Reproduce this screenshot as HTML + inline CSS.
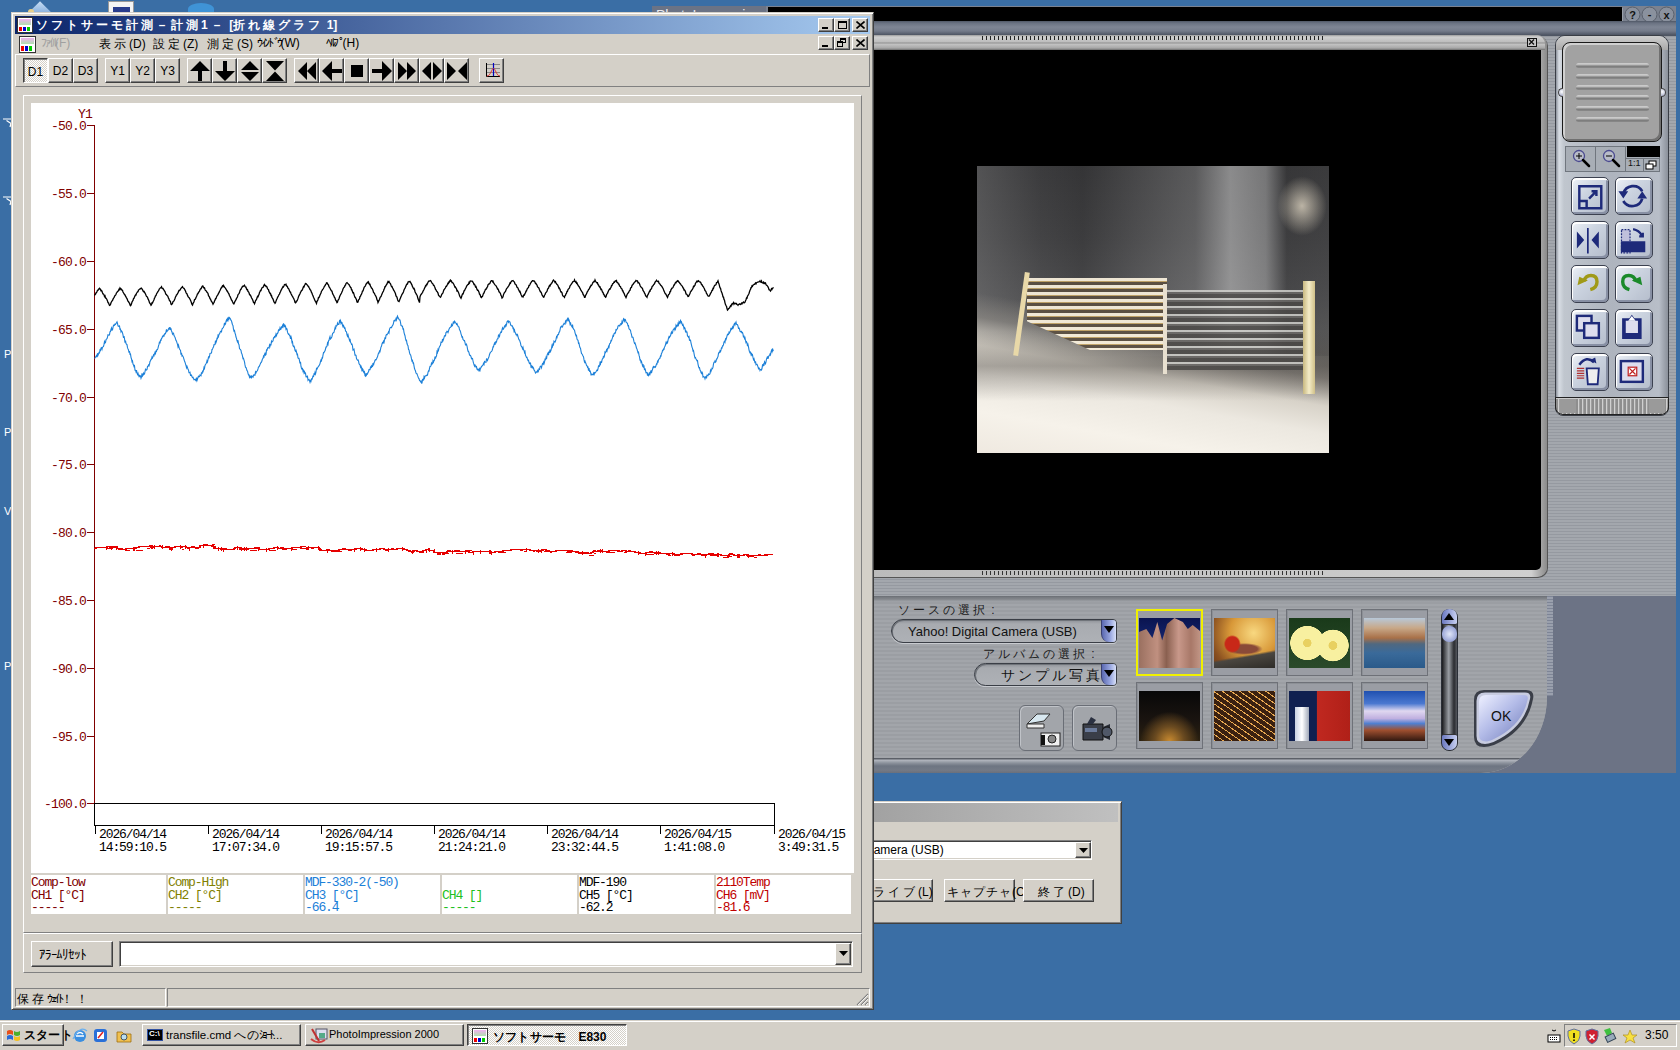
<!DOCTYPE html>
<html><head><meta charset="utf-8">
<style>
*{box-sizing:border-box;margin:0;padding:0}
html,body{width:1680px;height:1050px;overflow:hidden}
body{background:#3a6ea5;position:relative;font-family:"Liberation Sans",sans-serif;font-size:12px;color:#000}
.a{position:absolute}
.face{background:#d4d0c8}
.btn{position:absolute;background:#d4d0c8;border-top:1px solid #fff;border-left:1px solid #fff;border-right:1px solid #404040;border-bottom:1px solid #404040;box-shadow:inset -1px -1px #808080}
.sunk{position:absolute;border-top:1px solid #808080;border-left:1px solid #808080;border-right:1px solid #fff;border-bottom:1px solid #fff;box-shadow:inset 1px 1px #404040,inset -1px -1px #d4d0c8}
.thin-up{position:absolute;border-top:1px solid #fff;border-left:1px solid #fff;border-right:1px solid #808080;border-bottom:1px solid #808080}
.thin-dn{position:absolute;border-top:1px solid #808080;border-left:1px solid #808080;border-right:1px solid #fff;border-bottom:1px solid #fff}
.jf{letter-spacing:3px}
.jh{letter-spacing:-2.5px}
.t0 .jf{letter-spacing:0.2px}
.t1 .jf{letter-spacing:1px}
.mono{font-family:"Liberation Mono",monospace}
.tb{width:25px;height:25px;top:58px}
.tb span{position:absolute;left:0;right:0;top:5px;text-align:center;font-size:12px}
.lg{position:absolute;top:875px;width:135px;height:39px;background:#fff;font-family:"Liberation Mono",monospace;font-size:13px;line-height:12.5px;letter-spacing:-1.1px;padding:2px 0 0 0;white-space:pre;overflow:hidden}
.yl{position:absolute;left:44px;width:50px;font-family:"Liberation Mono",monospace;font-size:13px;line-height:15px;color:#800000;letter-spacing:-0.8px;white-space:pre}
.xl{position:absolute;top:829px;font-family:"Liberation Mono",monospace;font-size:13px;line-height:12.5px;letter-spacing:-1.1px;white-space:pre;color:#000}
.th{position:absolute;width:67px;height:67px;border:1px solid #6e7178;box-shadow:inset 1px 1px #8c9096;background:#9a9da4}
.th i{position:absolute;left:2px;top:8px;width:61px;height:50px;display:block}
.pb{position:absolute;width:43px;height:43px;border-radius:9px;background:linear-gradient(#dfe6f2,#9aa5c4);border:1px solid #5c6270;box-shadow:inset 1px 1px #fff,inset -1px -1px #6b738c}
</style></head><body>

<!-- ============ desktop icons peeking ============ -->
<div class="a" style="left:22px;top:0;width:36px;height:12px;background:linear-gradient(#cfe3f7,#8fb5e0);clip-path:polygon(20% 100%,50% 10%,80% 100%)"></div>
<div class="a" style="left:28px;top:9px;width:6px;height:3px;background:#e8d08a;border-radius:3px 3px 0 0"></div>
<div class="a" style="left:108px;top:1px;width:26px;height:11px;background:#f4f4f4;border:1px solid #9a9a9a;border-bottom:none"></div>
<div class="a" style="left:113px;top:7px;width:17px;height:5px;background:#283c8c"></div>
<div class="a" style="left:188px;top:3px;width:26px;height:12px;border-radius:50% 50% 0 0;background:#3f93d6"></div>
<svg class="a" style="left:3px;top:118px" width="8" height="10"><path d="M0 1H8M3.5 2.5L8 5.5L7 9" stroke="#fff" fill="none" stroke-width="1.2"/></svg>
<svg class="a" style="left:3px;top:196px" width="8" height="10"><path d="M0 1H8M3.5 2.5L8 5.5L7 9" stroke="#fff" fill="none" stroke-width="1.2"/></svg>
<div class="a" style="left:4px;top:348px;color:#fff;font-size:11px">P</div>
<div class="a" style="left:4px;top:426px;color:#fff;font-size:11px">P</div>
<div class="a" style="left:4px;top:505px;color:#fff;font-size:11px">V</div>
<div class="a" style="left:4px;top:660px;color:#fff;font-size:11px">P</div>

<!-- ============ PhotoImpression window ============ -->
<div class="a" style="left:652px;top:6px;width:114px;height:8px;background:#6b7385;overflow:hidden"><span class="a" style="left:4px;top:1px;color:#e8eaf0;font-size:14px;white-space:pre">PhotoImpression</span></div>
<div class="a" style="left:766px;top:6px;width:910px;height:590px;background:repeating-linear-gradient(#9599a0 0 1px,#a3a7ad 1px 3px)"></div>
<div class="a" style="left:766px;top:6px;width:910px;height:16px;background:#7b8290"></div>
<div class="a" style="left:768px;top:7px;width:854px;height:14px;background:#000;box-shadow:1px 1px #9aa0aa"></div>
<svg class="a" style="left:1624px;top:6px" width="52" height="17">
 <g fill="#8a919e" stroke="#5a606c" stroke-width="1"><circle cx="8.5" cy="8.5" r="7.5"/><circle cx="25.5" cy="8.5" r="7.5"/><circle cx="42.5" cy="8.5" r="7.5"/></g>
 <g font-family="Liberation Sans" font-weight="bold" font-size="11" fill="#111" text-anchor="middle"><text x="8.5" y="13">?</text><text x="25.5" y="12">-</text><text x="42.5" y="12.5">x</text></g>
</svg>
<div class="a" style="left:766px;top:21px;width:910px;height:15px;background:linear-gradient(#4f5766 0,#6a7282 2px,#7e8594 6px,#747b8a 10px,#4e5563 14px)"></div>
<!-- video panel -->
<div class="a" style="left:766px;top:35px;width:781px;height:542px;border-radius:0 10px 10px 0;background:linear-gradient(90deg,#b8b8b8,#cfcfcf 98%,#8a8a8a);box-shadow:1px 1px #555"></div>
<div class="a" style="left:766px;top:35px;width:779px;height:15px;border-radius:0 9px 0 0;background:linear-gradient(#9c9c9c 0,#d0d0d0 2px,#bdbdbd 7px,#8e8e8e 8px,#c4c4c4 9px,#a8a8a8 13px,#707070 15px)"></div>
<div class="a" style="left:982px;top:36px;width:341px;height:4px;background:repeating-linear-gradient(90deg,#222 0 1px,transparent 1px 4px)"></div>
<div class="a" style="left:1527px;top:38px;width:10px;height:9px;border:1.5px solid #111;background:#c8c8c8"><svg class="a" style="left:0;top:0" width="7" height="6"><path d="M1 0.5L6 5.5M6 0.5L1 5.5" stroke="#111" stroke-width="1.3"/></svg></div>
<div class="a" style="left:766px;top:50px;width:775px;height:520px;background:#000;border-radius:0 0 5px 0"></div>
<div class="a" style="left:982px;top:571px;width:341px;height:4px;background:repeating-linear-gradient(90deg,#333 0 1.5px,transparent 1.5px 4px)"></div>
<!-- photo -->
<div class="a" style="left:977px;top:166px;width:352px;height:287px;overflow:hidden;background:linear-gradient(#3a3a3c 0%,#434345 25%,#505052 45%,#5e5e5e 60%,#77726c 75%,#8a857e 100%)">
 <div class="a" style="left:0;top:0;width:352px;height:190px;background:linear-gradient(90deg,rgba(140,140,140,.3) 0%,rgba(70,70,70,.1) 18%,rgba(20,20,20,.15) 30%,rgba(120,120,120,.2) 45%,rgba(150,150,150,.35) 62%,rgba(205,205,205,.55) 72%,rgba(190,190,190,.45) 82%,rgba(40,40,40,.2) 88%,rgba(60,60,60,.2) 100%)"></div>
 <div class="a" style="left:300px;top:10px;width:50px;height:60px;background:radial-gradient(rgba(230,220,200,.75),rgba(200,190,170,0) 70%)"></div>
 <div class="a" style="left:0;top:0;width:352px;height:287px;background:linear-gradient(190deg,rgba(0,0,0,0) 54%,rgba(150,146,140,.55) 61%,rgba(220,215,205,.95) 69%,#ece8e0 77%,#f6f2ea 88%,#efe9e0 100%)"></div>
 <div class="a" style="left:0;top:165px;width:352px;height:70px;background:linear-gradient(180deg,rgba(70,66,62,0),rgba(70,66,62,.4) 50%,rgba(70,66,62,0))"></div>
 <div class="a" style="left:50px;top:112px;width:140px;height:72px;background:repeating-linear-gradient(180deg,#fff6e2 0 3px,#c8a868 3px 4px,#5a4e40 4px 7px);opacity:.9;clip-path:polygon(0 0,100% 0,100% 100%,45% 100%,0 60%)"></div>
 <div class="a" style="left:187px;top:124px;width:150px;height:80px;background:repeating-linear-gradient(180deg,#d0d0cc 0 2px,#6a6866 2px 4px,#4a4846 4px 8px);opacity:.85"></div>
 <div class="a" style="left:42px;top:106px;width:5px;height:84px;background:#e8d8a8;transform:rotate(8deg)"></div>
 <div class="a" style="left:186px;top:118px;width:4px;height:90px;background:#e8e0d0"></div>
 <div class="a" style="left:326px;top:115px;width:12px;height:113px;background:linear-gradient(90deg,#c8b880,#f4ecc8,#d0c088)"></div>
</div>
<!-- gap between video frame and right panel + right panel -->
<div class="a" style="left:1555px;top:35px;width:114px;height:381px;border-radius:10px 10px 8px 8px;background:linear-gradient(90deg,#8c929c 0,#d8dde4 3px,#c0c6ce 8px,#aeb4be 50%,#b8bec8 92%,#8a909a 100%);border:1px solid #3a3e46"></div>
<div class="a" style="left:1556px;top:36px;width:112px;height:14px;border-radius:9px 9px 0 0;background:linear-gradient(#cfcfcf,#a9a9a9)"></div>
<div class="a" style="left:1562px;top:42px;width:100px;height:100px;border-radius:8px;background:#a2a2a2;border:1px solid #1a1a1a;box-shadow:inset 2px 2px #d0d0d0,inset -2px -2px #707070"></div>
<div class="a" style="left:1576px;top:63px;width:73px;height:5px;border-radius:3px;background:linear-gradient(#d0d0d0,#b8b8b8 40%,#7a7a7a 60%,#8a8a8a)"></div><div class="a" style="left:1576px;top:74px;width:73px;height:5px;border-radius:3px;background:linear-gradient(#d0d0d0,#b8b8b8 40%,#7a7a7a 60%,#8a8a8a)"></div><div class="a" style="left:1576px;top:85px;width:73px;height:5px;border-radius:3px;background:linear-gradient(#d0d0d0,#b8b8b8 40%,#7a7a7a 60%,#8a8a8a)"></div><div class="a" style="left:1576px;top:95px;width:73px;height:5px;border-radius:3px;background:linear-gradient(#d0d0d0,#b8b8b8 40%,#7a7a7a 60%,#8a8a8a)"></div><div class="a" style="left:1576px;top:106px;width:73px;height:5px;border-radius:3px;background:linear-gradient(#d0d0d0,#b8b8b8 40%,#7a7a7a 60%,#8a8a8a)"></div><div class="a" style="left:1576px;top:117px;width:73px;height:5px;border-radius:3px;background:linear-gradient(#d0d0d0,#b8b8b8 40%,#7a7a7a 60%,#8a8a8a)"></div>
<div class="a" style="left:1565px;top:146px;width:95px;height:26px;background:#a8aeb6;border:1px solid #70767e"></div>
<div class="a" style="left:1595px;top:146px;width:1px;height:26px;background:#70767e"></div>
<div class="a" style="left:1625px;top:146px;width:1px;height:26px;background:#70767e"></div>
<div class="a" style="left:1627px;top:146px;width:33px;height:11px;background:#000"></div>
<div class="a" style="left:1626px;top:158px;width:34px;height:1px;background:#70767e"></div>
<div class="a" style="left:1643px;top:158px;width:1px;height:14px;background:#70767e"></div>
<span class="a" style="left:1628px;top:158px;font-size:9px;color:#111">1:1</span>
<svg class="a" style="left:1645px;top:160px" width="13" height="10"><rect x="4" y="1" width="7" height="5" fill="#fff" stroke="#000"/><rect x="1" y="4" width="7" height="5" fill="#fff" stroke="#000"/></svg>
<svg class="a" style="left:1570px;top:148px" width="90" height="24">
 <circle cx="9" cy="8" r="5.5" fill="#b8bcc8" stroke="#4a4a90" stroke-width="1.3"/><path d="M6 8H12M9 5V11" stroke="#000"/><path d="M13 12L19 18" stroke="#000" stroke-width="2.5" stroke-linecap="round"/>
 <circle cx="39" cy="8" r="5.5" fill="#b8bcc8" stroke="#4a4a90" stroke-width="1.3"/><path d="M36 8H42" stroke="#000"/><path d="M43 12L49 18" stroke="#000" stroke-width="2.5" stroke-linecap="round"/>
</svg>
<div class="a" style="left:1558px;top:88px;width:5px;height:9px;border-radius:5px 0 0 5px;background:radial-gradient(circle at 70% 40%,#fff,#9aa0c0);border:1px solid #444;border-right:none"></div>
<div class="a" style="left:1661px;top:88px;width:5px;height:9px;border-radius:0 5px 5px 0;background:radial-gradient(circle at 30% 40%,#fff,#9aa0c0);border:1px solid #444;border-left:none"></div>
<style>
.rb{position:absolute;width:38px;height:38px;border-radius:5px;border:1px solid #3c4150;background:linear-gradient(135deg,#eef2f8 0%,#ccd4e0 40%,#b4bccb 100%);box-shadow:inset 1px 2px #fff,inset -2px -2px #8890a4}
.rb svg{position:absolute;left:0;top:1px;transform:scale(1.22);transform-origin:0 0}
</style>
<div class="rb" style="left:1571px;top:177px"><svg width="26" height="26"><path d="M6 6H24V24H6Z" fill="none" stroke="#1e2a7a" stroke-width="2"/><path d="M6 18H12V24" fill="none" stroke="#1e2a7a" stroke-width="2"/><path d="M14 16L20 10M16 10H20V14" fill="none" stroke="#1e2a7a" stroke-width="2"/></svg></div>
<div class="rb" style="left:1615px;top:177px"><svg width="26" height="26"><path d="M6 12A8.5 8.5 0 0 1 21.5 10M21.5 16A8.5 8.5 0 0 1 6 18" fill="none" stroke="#1e2a7a" stroke-width="2.2"/><path d="M2 10L6 16L10 10ZM17.5 16L21.5 10L25.5 16Z" fill="#1e2a7a"/></svg></div>
<div class="rb" style="left:1571px;top:221px"><svg width="26" height="26"><path d="M4 7L10 14L4 21ZM22 7L16 14L22 21Z" fill="#1e2a7a"/><path d="M13 4V25" stroke="#1e2a7a" stroke-width="1.4"/></svg></div>
<div class="rb" style="left:1615px;top:221px"><svg width="26" height="26"><path d="M4.5 5.5H11.5V24.5H4.5Z" fill="#c0c0dc" stroke="#1e2a7a" stroke-dasharray="1.5 1"/><path d="M4 15H24V24H4Z" fill="#1e2a7a"/><path d="M14 5Q19 6 21 10M19 11H22V8" fill="none" stroke="#1e2a7a" stroke-width="1.8"/></svg></div>
<div class="rb" style="left:1571px;top:265px"><svg width="26" height="26"><path d="M10 11.5Q11 7 15.5 7Q20.5 7 20.5 12Q20.5 17 15 18.5" fill="none" stroke="#a09a18" stroke-width="2.8"/><path d="M4.5 15L6 8L13 11Z" fill="#a09a18"/></svg></div>
<div class="rb" style="left:1615px;top:265px"><svg width="26" height="26"><path d="M16 11.5Q15 7 10.5 7Q5.5 7 5.5 12Q5.5 17 11 18.5" fill="none" stroke="#1a8a2a" stroke-width="2.8"/><path d="M21.5 15L20 8L13 11Z" fill="#1a8a2a"/></svg></div>
<div class="rb" style="left:1571px;top:309px"><svg width="26" height="26"><rect x="4" y="4" width="12" height="12" fill="#dde" stroke="#1e2a7a" stroke-width="2"/><rect x="10" y="10" width="12" height="12" fill="#dde" stroke="#1e2a7a" stroke-width="2"/></svg></div>
<div class="rb" style="left:1615px;top:309px"><svg width="26" height="26"><path d="M5 6H11L13 3L15 6H21V23H5Z" fill="#1e2a7a"/><path d="M8 8H18V18H8Z" fill="#dde"/><path d="M10 8L13 4L16 8" fill="#fff"/></svg></div>
<div class="rb" style="left:1571px;top:353px"><svg width="26" height="26"><path d="M4 11H10M4 13H10M4 15H10M4 17H10M4 19H10" stroke="#b03030" stroke-width="1"/><path d="M12 11H22L21 24H13Z" fill="#eee" stroke="#1e2a7a" stroke-width="1.5"/><path d="M6 8Q12 0 18 6" fill="none" stroke="#1e2a7a" stroke-width="2"/><path d="M15 4L19 2L20 7Z" fill="#1e2a7a"/></svg></div>
<div class="rb" style="left:1615px;top:353px"><svg width="26" height="26"><rect x="4" y="5" width="18" height="17" fill="#dde" stroke="#1e2a7a" stroke-width="2"/><rect x="10" y="10" width="7" height="7" fill="#fff" stroke="#c02020"/><path d="M11 11L16 16M16 11L11 16" stroke="#c02020"/></svg></div>

<div class="a" style="left:1555px;top:397px;width:114px;height:18px;border-radius:0 0 8px 8px;background:repeating-linear-gradient(90deg,#8e8e8e 0 2px,#d0d0d0 2px 3px,#a0a0a0 3px 4px);border:1px solid #222;box-shadow:inset 0 1px #ccc"></div>
<div class="a" style="left:1560px;top:399px;width:16px;height:14px;background:#9a9a9a"></div>
<div class="a" style="left:1649px;top:399px;width:16px;height:14px;background:#9a9a9a"></div>
<!-- lower panel -->
<div class="a" style="left:1400px;top:596px;width:276px;height:177px;background:#6c7385"></div>
<div class="a" style="left:1546px;top:596px;width:7px;height:100px;background:repeating-linear-gradient(#7e8596 0 1px,#9aa0ad 1px 3px)"></div>
<div class="a" style="left:766px;top:596px;width:781px;height:177px;border-radius:0 0 66px 0 / 0 0 76px 0;background:linear-gradient(#808488 0,#a0a3a8 3px),#a0a3a8;overflow:hidden">
 <div class="a" style="left:0;top:0;width:787px;height:177px;background:repeating-linear-gradient(#a2a5aa 0 2px,#9b9ea3 2px 4px)"></div>
 <div class="a" style="left:0;top:0;width:787px;height:6px;background:linear-gradient(#6a6e74,rgba(160,163,168,0))"></div>
 <div class="a" style="left:0;top:162px;width:787px;height:15px;background:linear-gradient(#5c6068 0,#5c6068 1px,#b4b8c0 2px,#8c929c 5px,#6e7582 8px,#747a86 12px,#6a707c 15px)"></div>
</div>
<style>
.cb{position:absolute;border-radius:12px 4px 4px 12px;border:1px solid #3a3e46;background:linear-gradient(#8e9298,#a8abb0 4px,#aeb1b6);box-shadow:0 1px #c8cbd0,inset 1px 1px #70747a}
.cbd{position:absolute;right:0;top:0;width:15px;height:100%;border-radius:0 3px 3px 8px;background:linear-gradient(90deg,#5a68b0,#9aa8e0 60%,#d8e0f8);border-left:1px solid #3a4070}
.cbd:after{content:"";position:absolute;left:2px;top:6px;border-left:5px solid transparent;border-right:5px solid transparent;border-top:7px solid #000}
</style>
<span class="a" style="left:898px;top:602px;font-size:12px;color:#1a1a1a;white-space:pre"><span class="jf">ソースの選択</span> :</span>
<div class="cb" style="left:891px;top:619px;width:226px;height:24px"><span class="a" style="left:16px;top:4px;font-size:13px;color:#111;white-space:pre">Yahoo! Digital Camera (USB)</span><div class="cbd"></div></div>
<span class="a" style="left:983px;top:646px;font-size:12px;color:#1a1a1a;white-space:pre"><span class="jf">アルバムの選択</span> :</span>
<div class="cb" style="left:974px;top:663px;width:143px;height:23px"><span class="a" style="left:26px;top:3px;font-size:14px;color:#111;white-space:pre"><span class="jf">サンプル写真</span></span><div class="cbd"></div></div>
<div class="a" style="left:1019px;top:705px;width:45px;height:46px;border-radius:6px;border:1px solid #6a6e76;background:#a2a5aa;box-shadow:inset 1px 1px #c0c3c8"><svg class="a" style="left:4px;top:3px" width="38" height="40"><path d="M3 15L13 5H26L20 12Z" fill="#d8e8f0" stroke="#333"/><path d="M3 15H20V19H3Z" fill="#eee" stroke="#333"/><rect x="17" y="24" width="19" height="13" fill="#f0f0f0" stroke="#222"/><rect x="17" y="26" width="4" height="10" fill="#111"/><circle cx="28" cy="30" r="4" fill="#888" stroke="#222"/></svg></div>
<div class="a" style="left:1072px;top:705px;width:45px;height:46px;border-radius:6px;border:1px solid #6a6e76;background:#a2a5aa;box-shadow:inset 1px 1px #c0c3c8"><svg class="a" style="left:6px;top:8px" width="34" height="30"><path d="M4 10H24V26H4Z" fill="#3a3e48" stroke="#111"/><path d="M6 14H18V18H6Z" fill="#6a7a9a"/><path d="M24 13L31 10V26L24 23Z" fill="#2a2e38"/><circle cx="28" cy="18" r="5" fill="#505868" stroke="#111"/><path d="M8 10L12 3L17 6L14 10" fill="#2a3040"/></svg></div>
<!-- thumbnails -->
<div class="th" style="left:1136px;top:609px;border:2px solid #f0f000;box-shadow:none"><i style="left:1px;top:7px;background:linear-gradient(#0a1450,#203a90)"></i><i style="left:1px;top:7px;background:linear-gradient(90deg,#9a7060,#c09080 30%,#8a6050 45%,#c8988a 65%,#a87868 85%,#c09484);clip-path:polygon(0 28%,12% 22%,22% 40%,30% 8%,38% 45%,46% 12%,58% 0,72% 8%,80% 22%,88% 14%,100% 26%,100% 100%,0 100%)"></i></div>
<div class="th" style="left:1211px;top:609px"><i style="background:radial-gradient(ellipse 14% 18% at 30% 52%,#c82818 0 80%,rgba(0,0,0,0) 100%),radial-gradient(ellipse 30% 12% at 50% 62%,#8a4a38 0 70%,rgba(0,0,0,0) 100%),linear-gradient(170deg,rgba(0,0,0,0) 70%,#4a4640 74%,#2e2c28),radial-gradient(circle at 65% 30%,#f8d880,#d89838 45%,#8a5020 80%,#6a3a18)"></i></div>
<div class="th" style="left:1286px;top:609px"><i style="background:radial-gradient(circle at 30% 50%,#e8d060 0 8%,#f8f0a0 9% 34%,rgba(0,0,0,0) 35%),radial-gradient(circle at 72% 55%,#e8d060 0 8%,#f8f0a0 9% 30%,rgba(0,0,0,0) 31%),linear-gradient(#1a3a1a,#2a4a2a)"></i></div>
<div class="th" style="left:1361px;top:609px"><i style="background:linear-gradient(#b8c8d8 0%,#c8a888 20%,#a87048 40%,#506880 52%,#3a6a9a 70%,#2a5a8a 100%)"></i></div>
<div class="th" style="left:1136px;top:682px"><i style="background:radial-gradient(circle at 50% 100%,#c88a30 0,#6a4a20 25%,rgba(0,0,0,0) 50%),linear-gradient(#080808,#1a1410 60%,#2a2010)"></i></div>
<div class="th" style="left:1211px;top:682px"><i style="background:repeating-linear-gradient(35deg,#e8a850 0 1px,#3a2010 1px 5px),repeating-linear-gradient(-50deg,rgba(240,200,120,.7) 0 1px,rgba(0,0,0,0) 1px 6px),#2a1808"></i></div>
<div class="th" style="left:1286px;top:682px"><i style="background:linear-gradient(90deg,#102050 0%,#102050 45%,#c02820 46%,#b02018 100%)"><b class="a" style="left:6px;top:16px;width:14px;height:34px;background:linear-gradient(90deg,#c8d0e0,#fff,#a0a8b8)"></b></i></div>
<div class="th" style="left:1361px;top:682px"><i style="background:linear-gradient(#2050b0 0%,#4a78d0 25%,#e0d8f0 40%,#c0b0e0 55%,#5080d0 65%,#a05030 78%,#301810 100%)"></i></div>
<!-- scrollbar -->
<div class="a" style="left:1441px;top:609px;width:17px;height:142px;border-radius:8px;background:linear-gradient(90deg,#18191c,#9a9ea4 45%,#2a2c30 80%,#55585e);border:1px solid #2a2e36"></div>
<div class="a" style="left:1442px;top:609px;width:15px;height:16px;border-radius:7px 7px 2px 2px;background:linear-gradient(90deg,#6a78c0,#c8d0f0);border-bottom:1px solid #333"><div class="a" style="left:2px;top:4px;border-left:5px solid transparent;border-right:5px solid transparent;border-bottom:7px solid #000"></div></div>
<div class="a" style="left:1442px;top:626px;width:15px;height:16px;border-radius:7px;background:radial-gradient(circle at 50% 50%,#e0e6f8,#7a88c8)"></div>
<div class="a" style="left:1442px;top:734px;width:15px;height:16px;border-radius:2px 2px 7px 7px;background:linear-gradient(90deg,#6a78c0,#c8d0f0);border-top:1px solid #333"><div class="a" style="left:2px;top:4px;border-left:5px solid transparent;border-right:5px solid transparent;border-top:7px solid #000"></div></div>
<!-- OK -->
<svg class="a" style="left:1470px;top:686px" width="70" height="66">
 <defs><linearGradient id="okg" x1="0" y1="0" x2="1" y2="1"><stop offset="0" stop-color="#eef0ff"/><stop offset=".45" stop-color="#b4bce8"/><stop offset="1" stop-color="#6c78b8"/></linearGradient></defs>
 <path d="M14 4H56Q65 4 63 13Q57 45 24 59Q18 61 14 61Q4 61 4 51V14Q4 4 14 4Z" fill="#3a3e48"/>
 <path d="M15 6.5H55Q61.5 6.5 60 13Q54.5 42 23.5 56Q18 58 15 58Q6.5 58 6.5 50V15Q6.5 6.5 15 6.5Z" fill="#c8cce0"/>
 <path d="M16 9H54Q59 9 57.5 14Q52 40 23 53.5Q18 55.5 16 55.5Q9 55.5 9 49V16Q9 9 16 9Z" fill="url(#okg)"/>
 <text x="21" y="35" font-family="Liberation Sans" font-size="14" fill="#111">OK</text>
</svg>



<!-- ============ capture dialog ============ -->
<div class="a face" style="left:596px;top:801px;width:526px;height:123px;border-top:1px solid #d4d0c8;border-left:1px solid #d4d0c8;border-right:1px solid #404040;border-bottom:1px solid #404040;box-shadow:inset 1px 1px #fff,inset -1px -1px #808080"></div>
<div class="a" style="left:600px;top:803px;width:518px;height:19px;background:linear-gradient(90deg,#808080,#c0c0c0)"></div>
<div class="sunk" style="left:850px;top:840px;width:242px;height:20px;background:#fff"><span class="a" style="left:14px;top:2px;font-size:12px;white-space:pre">Camera (USB)</span></div>
<div class="btn" style="left:1075px;top:842px;width:16px;height:16px"><svg class="a" style="left:3px;top:5px" width="9" height="6"><path d="M0 0H9L4.5 5Z"/></svg></div>
<div class="btn" style="left:850px;top:879px;width:83px;height:23px"><span class="a" style="left:22px;top:4px;white-space:pre"><span class="jf">ライブ</span>(L)</span></div>
<div class="btn" style="left:944px;top:879px;width:71px;height:23px"><span class="a t1" style="left:2px;top:4px;white-space:pre"><span class="jf">キャプチャ</span>(C)</span></div>
<div class="btn" style="left:1023px;top:879px;width:71px;height:23px"><span class="a" style="left:14px;top:4px;white-space:pre"><span class="jf">終了</span>(D)</span></div>


<!-- ============ main window ============ -->
<div class="a face" style="left:11px;top:12px;width:863px;height:998px;border-top:1px solid #d4d0c8;border-left:1px solid #d4d0c8;border-right:1px solid #404040;border-bottom:1px solid #404040;box-shadow:inset 1px 1px #fff,inset -1px -1px #808080"></div>
<!-- title bar -->
<div class="a" style="left:15px;top:16px;width:855px;height:18px;background:linear-gradient(90deg,#0a246a 0%,#a6caf0 100%)"></div>
<div class="a" style="left:17px;top:17px;width:16px;height:16px;background:#fff;border:1px solid #333">
  <div class="a" style="left:1px;top:1px;width:12px;height:6px;background:linear-gradient(#f0b0f0,#b0e0b0)"></div>
  <div class="a" style="left:1px;top:9px;width:3px;height:4px;background:#e00"></div>
  <div class="a" style="left:5px;top:9px;width:3px;height:4px;background:#00c"></div>
  <div class="a" style="left:9px;top:9px;width:3px;height:4px;background:#0c0"></div>
</div>
<div class="a" style="left:36px;top:17px;color:#fff;font-weight:bold;font-size:12px;white-space:pre"><span class="jf">ソフトサーモ計測－計測</span>1 <span class="jf">－</span> [<span class="jf">折れ線グラフ</span> 1]</div>
<div class="btn" style="left:818px;top:18px;width:16px;height:14px"><div class="a" style="left:3px;top:8px;width:6px;height:2px;background:#000"></div></div>
<div class="btn" style="left:834px;top:18px;width:16px;height:14px"><div class="a" style="left:3px;top:2px;width:9px;height:8px;border:1px solid #000;border-top-width:2px"></div></div>
<div class="btn" style="left:852px;top:18px;width:16px;height:14px"><svg class="a" style="left:3px;top:2px" width="9" height="8"><path d="M0.5 0.5L8.5 7.5M8.5 0.5L0.5 7.5" stroke="#000" stroke-width="1.6"/></svg></div>
<!-- menu -->
<div class="a" style="left:19px;top:36px;width:17px;height:17px;background:#fff;border:1px solid #333">
  <div class="a" style="left:1px;top:1px;width:13px;height:6px;background:linear-gradient(#f0b0f0,#b0e0b0)"></div>
  <div class="a" style="left:1px;top:9px;width:3px;height:5px;background:#e00"></div>
  <div class="a" style="left:5px;top:9px;width:3px;height:5px;background:#00c"></div>
  <div class="a" style="left:9px;top:9px;width:3px;height:5px;background:#0c0"></div>
</div>
<div class="a" style="left:41px;top:36px;color:#a0a0a0;white-space:pre"><span class="jh">ﾌｧｲﾙ</span>(F)</div>
<div class="a" style="left:99px;top:36px;white-space:pre"><span class="jf">表示</span>(D)</div>
<div class="a" style="left:153px;top:36px;white-space:pre"><span class="jf">設定</span>(Z)</div>
<div class="a" style="left:207px;top:36px;white-space:pre"><span class="jf">測定</span>(S)</div>
<div class="a" style="left:257px;top:36px;white-space:pre"><span class="jh">ｳｨﾝﾄﾞｳ</span>(W)</div>
<div class="a" style="left:326px;top:36px;white-space:pre"><span class="jh">ﾍﾙﾌﾟ</span>(H)</div>
<div class="btn" style="left:818px;top:36px;width:16px;height:14px"><div class="a" style="left:3px;top:8px;width:6px;height:2px;background:#000"></div></div>
<div class="btn" style="left:834px;top:36px;width:16px;height:14px"><div class="a" style="left:5px;top:1px;width:6px;height:5px;border:1px solid #000;border-top-width:2px"></div><div class="a" style="left:2px;top:4px;width:6px;height:6px;border:1px solid #000;border-top-width:2px;background:#d4d0c8"></div></div>
<div class="btn" style="left:852px;top:36px;width:16px;height:14px"><svg class="a" style="left:3px;top:2px" width="9" height="8"><path d="M0.5 0.5L8.5 7.5M8.5 0.5L0.5 7.5" stroke="#000" stroke-width="1.6"/></svg></div>

<!-- ============ toolbar ============ -->
<div class="thin-up" style="left:15px;top:54px;width:855px;height:33px"></div>
<div class="a" style="left:23px;top:58px;width:25px;height:25px;border-top:1px solid #404040;border-left:1px solid #404040;border-right:1px solid #fff;border-bottom:1px solid #fff;box-shadow:inset 1px 1px #808080;background-color:#fff;background-image:repeating-conic-gradient(#d4d0c8 0% 25%,#fff 0% 50%);background-size:2px 2px"><span class="a" style="left:0;right:0;top:6px;text-align:center;font-size:12px">D1</span></div>
<div class="btn tb" style="left:48px"><span>D2</span></div>
<div class="btn tb" style="left:73px"><span>D3</span></div>
<div class="btn tb" style="left:105px"><span>Y1</span></div>
<div class="btn tb" style="left:130px"><span>Y2</span></div>
<div class="btn tb" style="left:155px"><span>Y3</span></div>
<div class="btn tb" style="left:187px"><svg class="a" style="left:-1px;top:-1px" width="25" height="25"><path d="M3 13L13 3L23 13H15V23H11V13Z"/></svg></div>
<div class="btn tb" style="left:212px"><svg class="a" style="left:-1px;top:-1px" width="25" height="25"><path d="M3 13L13 23L23 13H15V3H11V13Z"/></svg></div>
<div class="btn tb" style="left:237px"><svg class="a" style="left:-1px;top:-1px" width="25" height="25"><path d="M4 12L13 3L22 12ZM4 14L13 23L22 14Z"/></svg></div>
<div class="btn tb" style="left:262px"><svg class="a" style="left:-1px;top:-1px" width="25" height="25"><path d="M4 3H22L13 12.5ZM13 13.5L4 23H22Z"/></svg></div>
<div class="btn tb" style="left:294px"><svg class="a" style="left:-1px;top:-1px" width="25" height="25"><path d="M4 13L13 4V22ZM13 13L22 4V22Z"/></svg></div>
<div class="btn tb" style="left:319px"><svg class="a" style="left:-1px;top:-1px" width="25" height="25"><path d="M3 13L13 3V11H23V15H13V23Z"/></svg></div>
<div class="btn tb" style="left:344px"><svg class="a" style="left:-1px;top:-1px" width="25" height="25"><path d="M7 7H19V19H7Z"/></svg></div>
<div class="btn tb" style="left:369px"><svg class="a" style="left:-1px;top:-1px" width="25" height="25"><path d="M23 13L13 3V11H3V15H13V23Z"/></svg></div>
<div class="btn tb" style="left:394px"><svg class="a" style="left:-1px;top:-1px" width="25" height="25"><path d="M4 4L13 13L4 22ZM13 4L22 13L13 22Z"/></svg></div>
<div class="btn tb" style="left:419px"><svg class="a" style="left:-1px;top:-1px" width="25" height="25"><path d="M3 13L12 4V22ZM14 4L23 13L14 22Z"/></svg></div>
<div class="btn tb" style="left:444px"><svg class="a" style="left:-1px;top:-1px" width="25" height="25"><path d="M3 4L12 13L3 22ZM23 4L14 13L23 22Z"/></svg></div>
<div class="btn tb" style="left:479px"><svg class="a" style="left:-1px;top:-1px" width="25" height="25"><path d="M8 6.5H21M8 10.5H21M8 14.5H21" stroke="#888" stroke-width="1"/><path d="M7.5 5V18.5H21" stroke="#000" stroke-width="1" fill="none"/><path d="M14.5 5V18" stroke="#0000c0" stroke-width="1.2"/><path d="M8 18C10 18 11 16 12 14S13.5 10.5 14.5 10.5 16 12 17 14 19 18 21 18" stroke="#e03030" stroke-width="1" fill="none"/></svg></div>


<!-- ============ chart ============ -->
<div class="thin-up" style="left:23px;top:95px;width:839px;height:838px"></div>
<div class="a" style="left:31px;top:103px;width:823px;height:770px;background:#fff"></div>
<svg class="a" style="left:0;top:0" width="880" height="880" shape-rendering="crispEdges">
 <g stroke="#800000" stroke-width="1" fill="none">
  <path d="M94.5 125V804"/>
  <path d="M87 125.5H95M87 193.5H94M87 261.5H94M87 329.5H94M87 397.5H94M87 464.5H94M87 532.5H94M87 600.5H94M87 668.5H94M87 736.5H94M87 803.5H94"/>
 </g>
 <g stroke="#000" stroke-width="1" fill="none">
  <path d="M94.5 803.5H774.5V825.5H94.5Z"/>
  <path d="M95.5 826V834M208.5 826V834M321.5 826V834M434.5 826V834M547.5 826V834M660.5 826V834M774.5 826V834"/>
 </g>
</svg>
<svg class="a" style="left:0;top:0" width="880" height="880">
 <path d="M94.5 295.6 L95.0 294.5 L95.5 294.3 L96.0 292.7 L96.5 292.6 L97.0 291.6 L97.5 290.4 L98.0 290.4 L98.5 289.1 L99.0 289.1 L99.5 288.3 L100.0 288.7 L100.5 289.7 L101.0 290.8 L101.5 290.5 L102.0 291.4 L102.5 292.7 L103.0 293.9 L103.5 294.1 L104.0 294.7 L104.5 296.4 L105.0 295.9 L105.5 298.0 L106.0 298.1 L106.5 298.8 L107.0 299.7 L107.5 300.9 L108.0 302.6 L108.5 302.7 L109.0 304.3 L109.5 305.4 L110.0 305.2 L110.5 304.4 L111.0 302.7 L111.5 301.7 L112.0 300.9 L112.5 300.6 L113.0 299.3 L113.5 298.2 L114.0 297.6 L114.5 296.5 L115.0 295.4 L115.5 295.2 L116.0 294.2 L116.5 292.8 L117.0 292.4 L117.5 291.6 L118.0 291.3 L118.5 290.4 L119.0 289.2 L119.5 289.6 L120.0 287.9 L120.5 288.5 L121.0 289.5 L121.5 289.2 L122.0 290.3 L122.5 290.4 L123.0 292.0 L123.5 292.9 L124.0 293.5 L124.5 294.7 L125.0 294.8 L125.5 296.2 L126.0 296.9 L126.5 297.8 L127.0 298.6 L127.5 300.1 L128.0 301.2 L128.5 301.5 L129.0 302.8 L129.5 303.0 L130.0 304.9 L130.5 305.7 L131.0 305.1 L131.5 303.8 L132.0 302.0 L132.5 301.1 L133.0 300.5 L133.5 298.6 L134.0 298.3 L134.5 296.9 L135.0 295.9 L135.5 294.9 L136.0 295.0 L136.5 293.2 L137.0 292.6 L137.5 291.9 L138.0 291.8 L138.5 290.0 L139.0 289.8 L139.5 289.2 L140.0 289.1 L140.5 288.5 L141.0 288.5 L141.5 288.1 L142.0 288.9 L142.5 289.5 L143.0 290.9 L143.5 291.7 L144.0 291.4 L144.5 292.2 L145.0 293.1 L145.5 294.0 L146.0 295.2 L146.5 296.3 L147.0 296.7 L147.5 297.3 L148.0 298.9 L148.5 299.8 L149.0 301.0 L149.5 302.6 L150.0 303.3 L150.5 304.1 L151.0 305.3 L151.5 304.7 L152.0 302.8 L152.5 302.9 L153.0 301.7 L153.5 300.8 L154.0 299.7 L154.5 298.1 L155.0 297.2 L155.5 295.8 L156.0 295.6 L156.5 293.9 L157.0 293.0 L157.5 292.3 L158.0 291.4 L158.5 290.9 L159.0 289.7 L159.5 288.8 L160.0 288.4 L160.5 287.7 L161.0 287.5 L161.5 286.7 L162.0 288.3 L162.5 288.5 L163.0 288.5 L163.5 289.3 L164.0 290.2 L164.5 291.0 L165.0 291.5 L165.5 293.3 L166.0 294.4 L166.5 294.5 L167.0 295.5 L167.5 295.8 L168.0 296.8 L168.5 298.1 L169.0 299.0 L169.5 300.8 L170.0 300.9 L170.5 301.7 L171.0 304.1 L171.5 304.6 L172.0 304.0 L172.5 303.5 L173.0 301.7 L173.5 301.3 L174.0 300.9 L174.5 299.7 L175.0 298.5 L175.5 296.9 L176.0 296.1 L176.5 294.8 L177.0 294.7 L177.5 293.5 L178.0 293.0 L178.5 291.5 L179.0 290.5 L179.5 290.5 L180.0 290.0 L180.5 289.1 L181.0 288.3 L181.5 287.7 L182.0 287.2 L182.5 286.7 L183.0 287.7 L183.5 288.1 L184.0 288.3 L184.5 289.0 L185.0 290.2 L185.5 291.0 L186.0 292.4 L186.5 293.6 L187.0 293.8 L187.5 295.4 L188.0 296.4 L188.5 297.3 L189.0 297.5 L189.5 298.3 L190.0 299.3 L190.5 300.3 L191.0 301.4 L191.5 303.0 L192.0 304.5 L192.5 305.1 L193.0 303.5 L193.5 302.6 L194.0 301.7 L194.5 299.7 L195.0 299.4 L195.5 298.8 L196.0 297.6 L196.5 296.5 L197.0 295.2 L197.5 293.8 L198.0 293.7 L198.5 292.2 L199.0 291.9 L199.5 291.3 L200.0 289.7 L200.5 288.9 L201.0 288.9 L201.5 287.9 L202.0 286.5 L202.5 285.9 L203.0 286.0 L203.5 287.6 L204.0 288.0 L204.5 287.8 L205.0 289.5 L205.5 290.5 L206.0 290.8 L206.5 291.2 L207.0 292.4 L207.5 292.7 L208.0 293.5 L208.5 295.7 L209.0 296.3 L209.5 297.1 L210.0 298.7 L210.5 299.0 L211.0 300.6 L211.5 301.6 L212.0 301.9 L212.5 303.0 L213.0 304.2 L213.5 303.2 L214.0 302.6 L214.5 301.0 L215.0 300.2 L215.5 298.7 L216.0 298.7 L216.5 296.9 L217.0 296.0 L217.5 295.2 L218.0 294.7 L218.5 293.1 L219.0 292.8 L219.5 291.3 L220.0 290.5 L220.5 289.6 L221.0 288.1 L221.5 287.9 L222.0 286.9 L222.5 285.9 L223.0 286.5 L223.5 285.4 L224.0 286.3 L224.5 287.2 L225.0 287.7 L225.5 288.1 L226.0 289.1 L226.5 290.0 L227.0 291.1 L227.5 291.1 L228.0 292.6 L228.5 293.1 L229.0 294.1 L229.5 295.8 L230.0 296.4 L230.5 297.5 L231.0 298.8 L231.5 300.1 L232.0 300.5 L232.5 301.8 L233.0 302.8 L233.5 303.9 L234.0 303.9 L234.5 302.4 L235.0 301.4 L235.5 300.3 L236.0 299.8 L236.5 298.4 L237.0 297.6 L237.5 296.7 L238.0 294.7 L238.5 294.1 L239.0 293.7 L239.5 292.6 L240.0 290.7 L240.5 289.7 L241.0 289.3 L241.5 288.0 L242.0 287.4 L242.5 286.4 L243.0 286.6 L243.5 286.1 L244.0 285.8 L244.5 285.2 L245.0 286.5 L245.5 287.1 L246.0 287.1 L246.5 288.9 L247.0 289.8 L247.5 289.6 L248.0 291.5 L248.5 291.7 L249.0 292.7 L249.5 294.4 L250.0 295.2 L250.5 295.2 L251.0 296.6 L251.5 297.8 L252.0 298.6 L252.5 299.5 L253.0 300.8 L253.5 302.5 L254.0 302.6 L254.5 303.8 L255.0 302.5 L255.5 300.8 L256.0 300.1 L256.5 299.4 L257.0 298.1 L257.5 296.4 L258.0 296.7 L258.5 295.4 L259.0 294.6 L259.5 292.4 L260.0 291.6 L260.5 290.4 L261.0 290.5 L261.5 288.9 L262.0 287.8 L262.5 287.4 L263.0 287.3 L263.5 286.5 L264.0 285.0 L264.5 284.4 L265.0 285.6 L265.5 285.6 L266.0 286.5 L266.5 286.3 L267.0 287.0 L267.5 288.7 L268.0 289.2 L268.5 289.6 L269.0 291.7 L269.5 292.3 L270.0 293.5 L270.5 293.4 L271.0 295.5 L271.5 295.5 L272.0 297.6 L272.5 298.1 L273.0 299.1 L273.5 300.5 L274.0 302.1 L274.5 302.3 L275.0 303.3 L275.5 302.7 L276.0 301.1 L276.5 299.8 L277.0 298.8 L277.5 297.5 L278.0 296.6 L278.5 295.7 L279.0 294.6 L279.5 294.2 L280.0 292.5 L280.5 291.8 L281.0 290.4 L281.5 289.7 L282.0 288.3 L282.5 287.8 L283.0 286.6 L283.5 286.8 L284.0 285.8 L284.5 284.6 L285.0 284.4 L285.5 284.9 L286.0 284.3 L286.5 285.9 L287.0 286.1 L287.5 286.9 L288.0 288.2 L288.5 288.5 L289.0 289.5 L289.5 290.7 L290.0 292.0 L290.5 292.1 L291.0 293.8 L291.5 294.6 L292.0 295.6 L292.5 296.3 L293.0 297.3 L293.5 298.0 L294.0 299.2 L294.5 300.3 L295.0 302.4 L295.5 302.9 L296.0 302.3 L296.5 301.0 L297.0 300.9 L297.5 299.8 L298.0 298.4 L298.5 296.7 L299.0 295.6 L299.5 294.6 L300.0 293.7 L300.5 292.3 L301.0 291.7 L301.5 290.4 L302.0 290.4 L302.5 289.5 L303.0 288.0 L303.5 286.7 L304.0 286.9 L304.5 285.2 L305.0 284.6 L305.5 283.4 L306.0 283.5 L306.5 284.1 L307.0 284.8 L307.5 285.1 L308.0 286.2 L308.5 286.3 L309.0 287.6 L309.5 288.2 L310.0 289.6 L310.5 290.0 L311.0 291.0 L311.5 292.4 L312.0 293.3 L312.5 294.8 L313.0 295.8 L313.5 297.2 L314.0 298.2 L314.5 299.4 L315.0 300.8 L315.5 301.3 L316.0 302.4 L316.5 303.5 L317.0 301.2 L317.5 300.8 L318.0 299.5 L318.5 297.5 L319.0 297.5 L319.5 296.4 L320.0 295.0 L320.5 294.0 L321.0 293.1 L321.5 291.1 L322.0 290.6 L322.5 289.6 L323.0 289.1 L323.5 288.2 L324.0 287.3 L324.5 286.1 L325.0 285.8 L325.5 284.7 L326.0 284.1 L326.5 282.9 L327.0 282.8 L327.5 283.6 L328.0 284.6 L328.5 285.0 L329.0 286.8 L329.5 287.3 L330.0 288.2 L330.5 289.2 L331.0 290.2 L331.5 290.9 L332.0 291.2 L332.5 293.4 L333.0 294.4 L333.5 295.1 L334.0 296.3 L334.5 297.6 L335.0 297.9 L335.5 300.0 L336.0 300.5 L336.5 301.4 L337.0 302.6 L337.5 302.1 L338.0 300.1 L338.5 299.7 L339.0 298.8 L339.5 297.0 L340.0 295.7 L340.5 294.7 L341.0 293.9 L341.5 293.0 L342.0 291.7 L342.5 290.7 L343.0 288.9 L343.5 288.0 L344.0 287.2 L344.5 287.0 L345.0 285.5 L345.5 285.1 L346.0 283.5 L346.5 282.9 L347.0 282.6 L347.5 283.1 L348.0 283.7 L348.5 284.3 L349.0 284.5 L349.5 285.6 L350.0 286.4 L350.5 287.3 L351.0 287.7 L351.5 289.8 L352.0 289.8 L352.5 291.9 L353.0 292.9 L353.5 292.7 L354.0 294.4 L354.5 296.0 L355.0 297.3 L355.5 297.7 L356.0 298.7 L356.5 299.8 L357.0 302.0 L357.5 302.2 L358.0 302.0 L358.5 300.1 L359.0 299.4 L359.5 298.9 L360.0 296.5 L360.5 296.3 L361.0 294.8 L361.5 294.2 L362.0 292.8 L362.5 291.1 L363.0 291.0 L363.5 289.4 L364.0 287.7 L364.5 286.7 L365.0 286.5 L365.5 285.5 L366.0 284.4 L366.5 283.4 L367.0 283.0 L367.5 282.3 L368.0 282.7 L368.5 282.0 L369.0 283.7 L369.5 284.5 L370.0 284.3 L370.5 286.3 L371.0 286.9 L371.5 288.1 L372.0 288.2 L372.5 289.3 L373.0 290.4 L373.5 292.3 L374.0 292.8 L374.5 293.5 L375.0 294.8 L375.5 295.7 L376.0 296.5 L376.5 297.8 L377.0 300.0 L377.5 300.4 L378.0 302.6 L378.5 301.6 L379.0 300.4 L379.5 299.5 L380.0 297.8 L380.5 296.9 L381.0 296.5 L381.5 295.3 L382.0 294.0 L382.5 292.7 L383.0 292.0 L383.5 290.9 L384.0 289.3 L384.5 288.5 L385.0 286.6 L385.5 286.6 L386.0 285.3 L386.5 284.8 L387.0 283.9 L387.5 282.6 L388.0 281.6 L388.5 282.3 L389.0 281.5 L389.5 282.6 L390.0 283.1 L390.5 283.9 L391.0 285.3 L391.5 286.5 L392.0 286.5 L392.5 288.0 L393.0 288.5 L393.5 289.9 L394.0 290.7 L394.5 291.5 L395.0 292.6 L395.5 293.8 L396.0 295.9 L396.5 296.5 L397.0 297.3 L397.5 299.4 L398.0 300.8 L398.5 301.3 L399.0 301.6 L399.5 300.4 L400.0 299.0 L400.5 298.1 L401.0 296.6 L401.5 295.6 L402.0 294.4 L402.5 293.7 L403.0 293.0 L403.5 291.7 L404.0 290.1 L404.5 289.0 L405.0 288.1 L405.5 286.9 L406.0 285.9 L406.5 284.6 L407.0 284.0 L407.5 284.1 L408.0 282.1 L408.5 281.9 L409.0 281.5 L409.5 281.8 L410.0 281.5 L410.5 282.3 L411.0 283.1 L411.5 284.1 L412.0 285.1 L412.5 286.7 L413.0 287.5 L413.5 288.6 L414.0 288.4 L414.5 289.5 L415.0 291.5 L415.5 292.9 L416.0 293.4 L416.5 294.7 L417.0 295.1 L417.5 296.8 L418.0 298.8 L418.5 299.9 L419.0 301.2 L419.5 302.6 L420.0 296.7 L420.5 295.5 L421.0 294.5 L421.5 294.0 L422.0 293.2 L422.5 292.6 L423.0 291.3 L423.5 290.3 L424.0 289.5 L424.5 288.2 L425.0 287.4 L425.5 285.8 L426.0 286.0 L426.5 284.4 L427.0 284.6 L427.5 283.5 L428.0 282.3 L428.5 281.4 L429.0 281.0 L429.5 281.0 L430.0 280.8 L430.5 280.5 L431.0 281.0 L431.5 282.3 L432.0 283.0 L432.5 283.5 L433.0 284.0 L433.5 285.4 L434.0 285.4 L434.5 286.6 L435.0 287.7 L435.5 289.3 L436.0 289.8 L436.5 291.1 L437.0 291.4 L437.5 292.1 L438.0 293.1 L438.5 295.1 L439.0 295.7 L439.5 296.2 L440.0 296.8 L440.5 297.3 L441.0 296.5 L441.5 295.1 L442.0 293.9 L442.5 293.5 L443.0 292.8 L443.5 290.9 L444.0 289.7 L444.5 289.2 L445.0 288.4 L445.5 287.8 L446.0 286.3 L446.5 286.3 L447.0 285.4 L447.5 284.3 L448.0 283.1 L448.5 283.4 L449.0 281.8 L449.5 281.9 L450.0 280.5 L450.5 280.1 L451.0 281.2 L451.5 281.1 L452.0 282.7 L452.5 282.7 L453.0 283.0 L453.5 283.8 L454.0 284.8 L454.5 286.0 L455.0 287.2 L455.5 287.0 L456.0 288.2 L456.5 288.9 L457.0 290.9 L457.5 290.6 L458.0 291.5 L458.5 292.5 L459.0 293.9 L459.5 295.6 L460.0 296.6 L460.5 297.5 L461.0 298.3 L461.5 297.1 L462.0 295.3 L462.5 294.0 L463.0 294.1 L463.5 292.8 L464.0 290.9 L464.5 290.8 L465.0 289.5 L465.5 288.5 L466.0 287.6 L466.5 286.5 L467.0 285.4 L467.5 285.0 L468.0 284.3 L468.5 284.3 L469.0 282.4 L469.5 282.9 L470.0 281.2 L470.5 280.9 L471.0 281.1 L471.5 281.2 L472.0 281.1 L472.5 281.2 L473.0 282.5 L473.5 283.0 L474.0 284.5 L474.5 284.3 L475.0 285.3 L475.5 286.9 L476.0 286.5 L476.5 287.9 L477.0 289.4 L477.5 290.3 L478.0 290.2 L478.5 291.1 L479.0 292.1 L479.5 294.3 L480.0 294.4 L480.5 296.1 L481.0 297.3 L481.5 297.6 L482.0 296.5 L482.5 296.4 L483.0 294.9 L483.5 293.4 L484.0 293.0 L484.5 291.5 L485.0 290.5 L485.5 289.2 L486.0 289.3 L486.5 288.6 L487.0 287.4 L487.5 286.9 L488.0 284.8 L488.5 284.3 L489.0 283.9 L489.5 283.8 L490.0 283.1 L490.5 281.7 L491.0 280.9 L491.5 280.6 L492.0 280.6 L492.5 281.7 L493.0 281.2 L493.5 282.7 L494.0 283.3 L494.5 284.1 L495.0 284.8 L495.5 285.4 L496.0 285.8 L496.5 286.7 L497.0 287.6 L497.5 289.1 L498.0 289.0 L498.5 290.1 L499.0 291.8 L499.5 292.1 L500.0 292.8 L500.5 293.7 L501.0 295.5 L501.5 296.2 L502.0 298.1 L502.5 297.6 L503.0 296.7 L503.5 294.6 L504.0 293.4 L504.5 292.4 L505.0 292.0 L505.5 291.4 L506.0 290.0 L506.5 288.8 L507.0 288.2 L507.5 287.6 L508.0 286.8 L508.5 286.1 L509.0 285.4 L509.5 284.4 L510.0 282.9 L510.5 283.2 L511.0 281.7 L511.5 281.5 L512.0 280.7 L512.5 280.8 L513.0 280.5 L513.5 281.1 L514.0 281.7 L514.5 282.3 L515.0 284.0 L515.5 284.3 L516.0 284.7 L516.5 285.7 L517.0 287.3 L517.5 287.5 L518.0 288.0 L518.5 289.7 L519.0 290.4 L519.5 291.8 L520.0 291.5 L520.5 293.0 L521.0 294.5 L521.5 295.5 L522.0 296.6 L522.5 296.4 L523.0 297.0 L523.5 295.7 L524.0 294.8 L524.5 294.9 L525.0 293.4 L525.5 292.9 L526.0 291.1 L526.5 290.9 L527.0 289.4 L527.5 288.2 L528.0 288.0 L528.5 287.4 L529.0 285.4 L529.5 285.3 L530.0 284.5 L530.5 283.2 L531.0 282.7 L531.5 281.7 L532.0 281.2 L532.5 280.7 L533.0 280.7 L533.5 281.0 L534.0 280.9 L534.5 281.2 L535.0 282.3 L535.5 283.5 L536.0 283.5 L536.5 284.5 L537.0 285.1 L537.5 286.8 L538.0 287.3 L538.5 287.5 L539.0 288.4 L539.5 289.7 L540.0 290.9 L540.5 291.9 L541.0 292.1 L541.5 293.2 L542.0 295.0 L542.5 295.6 L543.0 296.4 L543.5 297.3 L544.0 297.1 L544.5 295.2 L545.0 294.6 L545.5 293.3 L546.0 292.4 L546.5 292.1 L547.0 291.3 L547.5 289.5 L548.0 288.4 L548.5 288.2 L549.0 286.6 L549.5 285.5 L550.0 285.9 L550.5 284.5 L551.0 284.3 L551.5 283.0 L552.0 282.9 L552.5 281.7 L553.0 280.7 L553.5 280.0 L554.0 280.7 L554.5 281.3 L555.0 282.3 L555.5 281.8 L556.0 283.2 L556.5 283.6 L557.0 284.5 L557.5 284.8 L558.0 285.8 L558.5 287.0 L559.0 288.4 L559.5 288.1 L560.0 289.6 L560.5 290.9 L561.0 292.1 L561.5 292.0 L562.0 292.8 L562.5 295.0 L563.0 296.0 L563.5 296.3 L564.0 296.7 L564.5 297.3 L565.0 295.6 L565.5 295.3 L566.0 293.9 L566.5 293.2 L567.0 291.3 L567.5 291.3 L568.0 289.5 L568.5 288.9 L569.0 288.6 L569.5 287.7 L570.0 286.0 L570.5 285.2 L571.0 284.7 L571.5 284.0 L572.0 283.1 L572.5 282.1 L573.0 281.6 L573.5 281.6 L574.0 281.4 L574.5 279.9 L575.0 281.0 L575.5 281.9 L576.0 281.5 L576.5 283.3 L577.0 283.0 L577.5 284.4 L578.0 285.1 L578.5 286.0 L579.0 286.4 L579.5 287.4 L580.0 288.5 L580.5 289.2 L581.0 290.4 L581.5 291.0 L582.0 292.0 L582.5 292.3 L583.0 294.2 L583.5 295.0 L584.0 295.6 L584.5 297.4 L585.0 297.4 L585.5 295.9 L586.0 294.5 L586.5 293.9 L587.0 292.5 L587.5 291.5 L588.0 291.0 L588.5 289.6 L589.0 289.2 L589.5 288.4 L590.0 286.8 L590.5 286.8 L591.0 285.2 L591.5 285.3 L592.0 284.6 L592.5 283.5 L593.0 282.2 L593.5 282.1 L594.0 281.3 L594.5 281.6 L595.0 280.0 L595.5 281.3 L596.0 282.0 L596.5 282.3 L597.0 283.0 L597.5 282.8 L598.0 284.7 L598.5 284.8 L599.0 286.2 L599.5 287.0 L600.0 286.8 L600.5 288.5 L601.0 289.6 L601.5 289.3 L602.0 290.6 L602.5 292.1 L603.0 292.2 L603.5 294.2 L604.0 294.3 L604.5 296.1 L605.0 296.1 L605.5 297.2 L606.0 296.8 L606.5 294.8 L607.0 293.9 L607.5 293.3 L608.0 292.0 L608.5 290.7 L609.0 290.0 L609.5 289.0 L610.0 289.2 L610.5 288.0 L611.0 287.4 L611.5 285.6 L612.0 285.6 L612.5 283.9 L613.0 283.7 L613.5 283.2 L614.0 282.1 L614.5 282.2 L615.0 281.2 L615.5 280.8 L616.0 281.2 L616.5 280.6 L617.0 282.4 L617.5 282.6 L618.0 282.9 L618.5 284.2 L619.0 284.2 L619.5 286.0 L620.0 286.2 L620.5 286.7 L621.0 288.2 L621.5 288.6 L622.0 289.1 L622.5 290.8 L623.0 290.8 L623.5 292.8 L624.0 293.0 L624.5 294.5 L625.0 295.9 L625.5 296.4 L626.0 297.5 L626.5 296.2 L627.0 294.8 L627.5 293.8 L628.0 293.0 L628.5 292.7 L629.0 291.5 L629.5 290.7 L630.0 290.3 L630.5 288.3 L631.0 287.6 L631.5 287.3 L632.0 285.6 L632.5 284.8 L633.0 284.5 L633.5 283.4 L634.0 283.0 L634.5 282.1 L635.0 282.0 L635.5 281.4 L636.0 280.4 L636.5 280.7 L637.0 281.0 L637.5 281.0 L638.0 282.8 L638.5 282.5 L639.0 283.0 L639.5 283.7 L640.0 285.2 L640.5 286.4 L641.0 287.1 L641.5 287.4 L642.0 288.0 L642.5 288.6 L643.0 290.4 L643.5 291.2 L644.0 291.8 L644.5 293.2 L645.0 293.9 L645.5 295.5 L646.0 296.2 L646.5 296.6 L647.0 297.3 L647.5 295.1 L648.0 294.8 L648.5 293.6 L649.0 292.4 L649.5 291.2 L650.0 291.3 L650.5 289.3 L651.0 289.1 L651.5 288.8 L652.0 286.8 L652.5 286.1 L653.0 285.8 L653.5 284.9 L654.0 284.3 L654.5 283.8 L655.0 282.2 L655.5 281.8 L656.0 281.2 L656.5 280.3 L657.0 281.1 L657.5 281.3 L658.0 281.7 L658.5 281.3 L659.0 283.1 L659.5 283.7 L660.0 284.0 L660.5 285.1 L661.0 285.5 L661.5 286.0 L662.0 286.7 L662.5 287.7 L663.0 288.3 L663.5 289.6 L664.0 291.1 L664.5 292.0 L665.0 293.1 L665.5 293.9 L666.0 294.2 L666.5 295.6 L667.0 296.5 L667.5 297.4 L668.0 296.0 L668.5 294.6 L669.0 294.2 L669.5 293.7 L670.0 291.7 L670.5 291.7 L671.0 289.5 L671.5 289.0 L672.0 288.1 L672.5 287.9 L673.0 287.3 L673.5 286.2 L674.0 284.9 L674.5 284.9 L675.0 283.4 L675.5 282.5 L676.0 282.8 L676.5 281.8 L677.0 281.3 L677.5 280.8 L678.0 281.4 L678.5 281.2 L679.0 282.3 L679.5 282.7 L680.0 283.6 L680.5 283.7 L681.0 284.9 L681.5 285.4 L682.0 285.9 L682.5 286.6 L683.0 288.0 L683.5 288.1 L684.0 290.1 L684.5 290.0 L685.0 290.7 L685.5 291.8 L686.0 293.9 L686.5 294.0 L687.0 294.7 L687.5 295.5 L688.0 296.6 L688.5 296.5 L689.0 295.4 L689.5 294.5 L690.0 293.6 L690.5 291.7 L691.0 291.5 L691.5 290.3 L692.0 290.0 L692.5 289.1 L693.0 288.3 L693.5 286.3 L694.0 286.6 L694.5 285.9 L695.0 285.2 L695.5 283.2 L696.0 282.7 L696.5 281.9 L697.0 281.1 L697.5 281.7 L698.0 281.2 L698.5 280.8 L699.0 281.5 L699.5 281.8 L700.0 281.9 L700.5 282.3 L701.0 283.0 L701.5 284.7 L702.0 284.7 L702.5 285.6 L703.0 286.6 L703.5 286.9 L704.0 288.0 L704.5 289.0 L705.0 290.5 L705.5 290.9 L706.0 291.7 L706.5 293.6 L707.0 293.9 L707.5 295.3 L708.0 296.0 L708.5 296.2 L709.0 296.3 L709.5 295.3 L710.0 294.8 L710.5 293.3 L711.0 292.8 L711.5 291.7 L712.0 290.3 L712.5 290.3 L713.0 288.3 L713.5 288.5 L714.0 286.7 L714.5 285.6 L715.0 285.1 L715.5 285.1 L716.0 284.7 L716.5 282.6 L717.0 282.6 L717.5 281.9 L718.0 280.9 L718.5 282.7 L719.0 283.9 L719.5 285.9 L720.0 287.8 L720.5 288.1 L721.0 290.4 L721.5 292.1 L722.0 293.0 L722.5 294.7 L723.0 297.0 L723.5 297.1 L724.0 299.4 L724.5 300.3 L725.0 302.8 L725.5 304.6 L726.0 305.5 L726.5 306.3 L727.0 308.6 L727.5 310.1 L728.0 309.7 L728.5 308.7 L729.0 308.3 L729.5 308.0 L730.0 306.9 L730.5 306.0 L731.0 306.3 L731.5 304.4 L732.0 304.6 L732.5 303.5 L733.0 303.4 L733.5 302.6 L734.0 304.2 L734.5 303.4 L735.0 303.1 L735.5 303.6 L736.0 304.0 L736.5 303.6 L737.0 304.5 L737.5 304.7 L738.0 305.3 L738.5 304.5 L739.0 304.2 L739.5 303.9 L740.0 304.5 L740.5 304.6 L741.0 303.8 L741.5 303.1 L742.0 303.8 L742.5 302.9 L743.0 302.4 L743.5 302.0 L744.0 302.9 L744.5 302.7 L745.0 302.2 L745.5 300.8 L746.0 299.8 L746.5 298.1 L747.0 298.2 L747.5 296.1 L748.0 295.4 L748.5 294.5 L749.0 293.4 L749.5 291.7 L750.0 290.2 L750.5 289.5 L751.0 287.7 L751.5 287.7 L752.0 285.8 L752.5 286.2 L753.0 285.0 L753.5 284.9 L754.0 284.4 L754.5 284.3 L755.0 283.6 L755.5 283.0 L756.0 283.9 L756.5 282.8 L757.0 282.5 L757.5 282.2 L758.0 282.2 L758.5 281.8 L759.0 281.8 L759.5 281.6 L760.0 280.8 L760.5 281.9 L761.0 282.1 L761.5 281.0 L762.0 282.5 L762.5 282.9 L763.0 283.0 L763.5 282.2 L764.0 283.5 L764.5 283.5 L765.0 282.7 L765.5 283.0 L766.0 284.7 L766.5 285.1 L767.0 285.4 L767.5 286.0 L768.0 286.9 L768.5 287.9 L769.0 289.7 L769.5 289.9 L770.0 290.4 L770.5 291.1 L771.0 290.3 L771.5 288.8 L772.0 289.3 L772.5 288.3 L773.0 288.0 L773.5 287.3" stroke="#000" stroke-width="1.3" fill="none"/>
 <path d="M94.5 358.5 L95.0 357.9 L95.5 357.2 L96.0 356.2 L96.5 355.5 L97.0 357.3 L97.5 353.2 L98.0 355.3 L98.5 354.1 L99.0 352.5 L99.5 352.8 L100.0 350.0 L100.5 350.5 L101.0 348.0 L101.5 347.7 L102.0 349.4 L102.5 347.2 L103.0 346.9 L103.5 346.5 L104.0 344.4 L104.5 341.6 L105.0 342.9 L105.5 342.4 L106.0 339.8 L106.5 339.0 L107.0 338.6 L107.5 337.1 L108.0 334.7 L108.5 334.9 L109.0 335.3 L109.5 334.8 L110.0 331.7 L110.5 331.5 L111.0 329.4 L111.5 328.0 L112.0 330.1 L112.5 329.8 L113.0 327.4 L113.5 325.4 L114.0 324.9 L114.5 325.3 L115.0 324.1 L115.5 324.5 L116.0 323.6 L116.5 322.7 L117.0 321.8 L117.5 323.5 L118.0 326.0 L118.5 326.3 L119.0 326.0 L119.5 325.9 L120.0 329.3 L120.5 329.2 L121.0 331.8 L121.5 330.9 L122.0 331.5 L122.5 332.8 L123.0 334.8 L123.5 337.8 L124.0 336.2 L124.5 338.7 L125.0 342.7 L125.5 340.7 L126.0 343.6 L126.5 344.3 L127.0 344.6 L127.5 347.7 L128.0 348.9 L128.5 350.0 L129.0 352.7 L129.5 351.1 L130.0 354.3 L130.5 354.1 L131.0 357.3 L131.5 359.0 L132.0 361.6 L132.5 360.9 L133.0 364.1 L133.5 365.0 L134.0 366.5 L134.5 365.8 L135.0 370.2 L135.5 370.2 L136.0 371.8 L136.5 370.2 L137.0 372.9 L137.5 374.4 L138.0 373.2 L138.5 375.1 L139.0 376.4 L139.5 375.5 L140.0 376.5 L140.5 376.0 L141.0 378.2 L141.5 376.8 L142.0 373.4 L142.5 376.0 L143.0 375.2 L143.5 373.2 L144.0 374.4 L144.5 374.0 L145.0 371.7 L145.5 369.2 L146.0 369.8 L146.5 370.0 L147.0 369.4 L147.5 366.6 L148.0 366.1 L148.5 364.9 L149.0 365.8 L149.5 364.4 L150.0 361.3 L150.5 360.9 L151.0 359.2 L151.5 359.2 L152.0 357.0 L152.5 357.9 L153.0 356.6 L153.5 354.9 L154.0 355.7 L154.5 353.9 L155.0 352.3 L155.5 353.6 L156.0 351.1 L156.5 351.3 L157.0 349.5 L157.5 349.4 L158.0 348.2 L158.5 345.8 L159.0 344.4 L159.5 341.6 L160.0 343.4 L160.5 340.2 L161.0 340.3 L161.5 338.3 L162.0 338.1 L162.5 336.3 L163.0 336.5 L163.5 335.5 L164.0 336.0 L164.5 333.9 L165.0 334.1 L165.5 333.4 L166.0 331.7 L166.5 329.4 L167.0 331.4 L167.5 330.6 L168.0 330.4 L168.5 328.7 L169.0 328.1 L169.5 329.7 L170.0 327.2 L170.5 329.3 L171.0 328.9 L171.5 331.0 L172.0 332.0 L172.5 334.1 L173.0 333.2 L173.5 333.1 L174.0 335.5 L174.5 336.5 L175.0 337.3 L175.5 338.9 L176.0 340.4 L176.5 341.2 L177.0 342.8 L177.5 344.3 L178.0 346.7 L178.5 345.1 L179.0 347.3 L179.5 348.9 L180.0 349.9 L180.5 350.1 L181.0 354.6 L181.5 352.9 L182.0 356.0 L182.5 355.6 L183.0 356.4 L183.5 357.6 L184.0 359.3 L184.5 361.0 L185.0 362.2 L185.5 363.8 L186.0 365.5 L186.5 367.7 L187.0 366.3 L187.5 367.7 L188.0 369.3 L188.5 369.9 L189.0 372.8 L189.5 372.8 L190.0 372.3 L190.5 375.4 L191.0 375.3 L191.5 375.0 L192.0 376.7 L192.5 377.5 L193.0 377.2 L193.5 378.5 L194.0 379.7 L194.5 379.4 L195.0 379.8 L195.5 379.4 L196.0 381.1 L196.5 377.6 L197.0 380.5 L197.5 379.1 L198.0 377.3 L198.5 376.3 L199.0 376.9 L199.5 376.7 L200.0 375.0 L200.5 375.4 L201.0 375.8 L201.5 372.3 L202.0 373.9 L202.5 371.3 L203.0 371.8 L203.5 370.0 L204.0 367.4 L204.5 368.4 L205.0 365.5 L205.5 364.5 L206.0 363.7 L206.5 362.8 L207.0 360.7 L207.5 361.9 L208.0 359.6 L208.5 357.1 L209.0 357.7 L209.5 356.6 L210.0 353.5 L210.5 353.3 L211.0 353.3 L211.5 353.0 L212.0 349.4 L212.5 349.3 L213.0 347.7 L213.5 347.0 L214.0 344.7 L214.5 344.8 L215.0 344.6 L215.5 340.6 L216.0 342.4 L216.5 341.0 L217.0 338.3 L217.5 338.5 L218.0 335.5 L218.5 336.5 L219.0 334.1 L219.5 334.0 L220.0 332.7 L220.5 331.4 L221.0 331.2 L221.5 331.8 L222.0 329.0 L222.5 328.5 L223.0 327.8 L223.5 327.3 L224.0 325.7 L224.5 322.9 L225.0 324.7 L225.5 324.1 L226.0 321.3 L226.5 319.9 L227.0 321.5 L227.5 318.9 L228.0 320.3 L228.5 317.9 L229.0 319.0 L229.5 317.6 L230.0 318.2 L230.5 319.1 L231.0 320.4 L231.5 320.8 L232.0 323.0 L232.5 324.7 L233.0 325.6 L233.5 329.4 L234.0 331.1 L234.5 330.5 L235.0 333.1 L235.5 334.5 L236.0 337.0 L236.5 338.3 L237.0 340.6 L237.5 341.8 L238.0 340.2 L238.5 343.9 L239.0 344.6 L239.5 348.6 L240.0 349.2 L240.5 349.7 L241.0 350.4 L241.5 353.2 L242.0 354.0 L242.5 356.1 L243.0 358.7 L243.5 358.4 L244.0 360.1 L244.5 361.8 L245.0 364.9 L245.5 367.3 L246.0 367.5 L246.5 368.8 L247.0 370.7 L247.5 371.0 L248.0 373.3 L248.5 374.9 L249.0 374.9 L249.5 377.3 L250.0 376.3 L250.5 377.3 L251.0 376.4 L251.5 377.7 L252.0 376.1 L252.5 376.6 L253.0 377.1 L253.5 375.3 L254.0 374.8 L254.5 375.1 L255.0 375.1 L255.5 371.9 L256.0 372.8 L256.5 371.5 L257.0 371.2 L257.5 370.5 L258.0 368.9 L258.5 366.9 L259.0 366.7 L259.5 365.9 L260.0 364.6 L260.5 363.6 L261.0 362.3 L261.5 362.3 L262.0 360.5 L262.5 358.8 L263.0 358.5 L263.5 356.1 L264.0 356.9 L264.5 354.4 L265.0 353.3 L265.5 355.0 L266.0 354.4 L266.5 350.1 L267.0 350.3 L267.5 348.3 L268.0 347.6 L268.5 347.7 L269.0 348.2 L269.5 345.0 L270.0 346.3 L270.5 344.6 L271.0 344.8 L271.5 341.1 L272.0 342.0 L272.5 341.3 L273.0 341.0 L273.5 337.9 L274.0 337.9 L274.5 336.6 L275.0 337.2 L275.5 336.1 L276.0 334.0 L276.5 335.6 L277.0 333.8 L277.5 333.6 L278.0 332.5 L278.5 329.9 L279.0 330.5 L279.5 330.1 L280.0 327.9 L280.5 329.4 L281.0 329.1 L281.5 326.4 L282.0 328.2 L282.5 325.6 L283.0 326.6 L283.5 323.4 L284.0 324.8 L284.5 327.1 L285.0 325.3 L285.5 326.1 L286.0 329.3 L286.5 328.5 L287.0 329.1 L287.5 332.2 L288.0 333.6 L288.5 334.4 L289.0 334.2 L289.5 335.7 L290.0 335.9 L290.5 338.9 L291.0 336.7 L291.5 338.4 L292.0 342.4 L292.5 341.8 L293.0 345.5 L293.5 346.6 L294.0 346.1 L294.5 347.3 L295.0 350.3 L295.5 351.3 L296.0 350.2 L296.5 351.8 L297.0 354.6 L297.5 354.2 L298.0 357.9 L298.5 358.4 L299.0 358.3 L299.5 360.6 L300.0 363.5 L300.5 361.8 L301.0 366.5 L301.5 368.3 L302.0 369.2 L302.5 368.5 L303.0 371.2 L303.5 370.4 L304.0 372.8 L304.5 371.6 L305.0 373.5 L305.5 373.2 L306.0 376.7 L306.5 376.4 L307.0 377.1 L307.5 376.4 L308.0 380.2 L308.5 379.4 L309.0 379.3 L309.5 380.7 L310.0 382.3 L310.5 380.5 L311.0 381.3 L311.5 378.9 L312.0 379.3 L312.5 378.2 L313.0 375.5 L313.5 377.0 L314.0 373.9 L314.5 374.3 L315.0 372.3 L315.5 373.9 L316.0 371.9 L316.5 368.5 L317.0 369.0 L317.5 367.9 L318.0 366.9 L318.5 366.6 L319.0 365.5 L319.5 365.0 L320.0 363.6 L320.5 361.5 L321.0 360.0 L321.5 360.8 L322.0 358.0 L322.5 358.1 L323.0 355.1 L323.5 352.6 L324.0 352.7 L324.5 351.4 L325.0 351.0 L325.5 349.0 L326.0 347.0 L326.5 346.9 L327.0 346.1 L327.5 343.2 L328.0 344.3 L328.5 340.8 L329.0 340.4 L329.5 338.1 L330.0 336.6 L330.5 339.0 L331.0 338.3 L331.5 337.7 L332.0 336.4 L332.5 333.8 L333.0 333.2 L333.5 332.4 L334.0 332.3 L334.5 330.0 L335.0 327.9 L335.5 329.4 L336.0 325.7 L336.5 326.0 L337.0 325.5 L337.5 323.1 L338.0 324.3 L338.5 324.5 L339.0 324.2 L339.5 320.9 L340.0 321.7 L340.5 320.5 L341.0 323.4 L341.5 322.4 L342.0 322.7 L342.5 325.4 L343.0 326.7 L343.5 325.5 L344.0 326.8 L344.5 328.2 L345.0 328.0 L345.5 330.8 L346.0 331.6 L346.5 331.8 L347.0 334.8 L347.5 336.2 L348.0 334.7 L348.5 336.8 L349.0 338.3 L349.5 340.3 L350.0 338.9 L350.5 342.2 L351.0 342.9 L351.5 344.3 L352.0 344.2 L352.5 346.2 L353.0 350.0 L353.5 349.7 L354.0 349.2 L354.5 352.0 L355.0 355.2 L355.5 355.1 L356.0 355.4 L356.5 358.5 L357.0 359.5 L357.5 360.2 L358.0 359.8 L358.5 360.8 L359.0 363.6 L359.5 364.5 L360.0 364.6 L360.5 367.2 L361.0 366.1 L361.5 367.3 L362.0 371.4 L362.5 368.8 L363.0 369.5 L363.5 371.8 L364.0 372.6 L364.5 371.8 L365.0 375.8 L365.5 376.2 L366.0 373.3 L366.5 375.0 L367.0 373.7 L367.5 373.9 L368.0 372.4 L368.5 371.9 L369.0 369.6 L369.5 369.6 L370.0 369.6 L370.5 367.3 L371.0 366.5 L371.5 368.0 L372.0 364.8 L372.5 366.9 L373.0 363.0 L373.5 365.4 L374.0 362.8 L374.5 362.0 L375.0 360.3 L375.5 359.7 L376.0 359.8 L376.5 358.9 L377.0 357.7 L377.5 356.9 L378.0 354.8 L378.5 353.1 L379.0 353.2 L379.5 351.1 L380.0 351.6 L380.5 349.3 L381.0 346.9 L381.5 346.3 L382.0 344.0 L382.5 342.6 L383.0 343.0 L383.5 341.2 L384.0 342.4 L384.5 340.4 L385.0 337.4 L385.5 339.0 L386.0 335.4 L386.5 334.5 L387.0 334.7 L387.5 333.9 L388.0 333.2 L388.5 331.9 L389.0 332.9 L389.5 329.3 L390.0 328.0 L390.5 327.4 L391.0 327.3 L391.5 327.7 L392.0 326.6 L392.5 325.4 L393.0 325.0 L393.5 323.1 L394.0 320.5 L394.5 320.2 L395.0 320.9 L395.5 320.0 L396.0 318.6 L396.5 319.9 L397.0 317.2 L397.5 316.2 L398.0 318.2 L398.5 318.1 L399.0 319.4 L399.5 320.0 L400.0 320.0 L400.5 322.4 L401.0 325.4 L401.5 325.9 L402.0 325.9 L402.5 326.4 L403.0 329.0 L403.5 328.9 L404.0 332.3 L404.5 334.3 L405.0 335.7 L405.5 338.7 L406.0 340.5 L406.5 340.3 L407.0 343.5 L407.5 345.1 L408.0 345.8 L408.5 349.5 L409.0 349.8 L409.5 352.6 L410.0 354.4 L410.5 354.6 L411.0 356.4 L411.5 358.9 L412.0 361.1 L412.5 360.5 L413.0 363.1 L413.5 362.9 L414.0 365.9 L414.5 368.5 L415.0 369.8 L415.5 371.0 L416.0 373.1 L416.5 373.7 L417.0 373.7 L417.5 375.4 L418.0 376.6 L418.5 378.2 L419.0 378.6 L419.5 380.4 L420.0 380.8 L420.5 381.7 L421.0 381.0 L421.5 383.1 L422.0 383.0 L422.5 379.6 L423.0 379.2 L423.5 380.5 L424.0 376.9 L424.5 378.1 L425.0 376.0 L425.5 376.0 L426.0 375.6 L426.5 375.7 L427.0 374.9 L427.5 375.2 L428.0 372.3 L428.5 370.9 L429.0 371.0 L429.5 368.3 L430.0 366.4 L430.5 366.5 L431.0 365.7 L431.5 363.2 L432.0 364.1 L432.5 363.7 L433.0 360.7 L433.5 362.1 L434.0 360.6 L434.5 360.2 L435.0 356.6 L435.5 358.5 L436.0 356.5 L436.5 356.2 L437.0 351.6 L437.5 352.5 L438.0 349.4 L438.5 350.4 L439.0 347.8 L439.5 346.7 L440.0 345.9 L440.5 345.2 L441.0 342.2 L441.5 342.5 L442.0 342.3 L442.5 339.0 L443.0 340.5 L443.5 339.2 L444.0 337.6 L444.5 335.8 L445.0 336.0 L445.5 336.0 L446.0 332.4 L446.5 332.3 L447.0 331.2 L447.5 331.4 L448.0 332.5 L448.5 331.0 L449.0 329.2 L449.5 328.2 L450.0 327.5 L450.5 327.2 L451.0 326.8 L451.5 324.6 L452.0 326.0 L452.5 325.5 L453.0 323.4 L453.5 321.5 L454.0 323.7 L454.5 321.2 L455.0 321.8 L455.5 322.9 L456.0 323.1 L456.5 324.3 L457.0 323.6 L457.5 324.9 L458.0 326.2 L458.5 326.7 L459.0 327.0 L459.5 329.8 L460.0 330.3 L460.5 331.7 L461.0 333.8 L461.5 335.4 L462.0 337.2 L462.5 336.9 L463.0 339.4 L463.5 340.0 L464.0 340.7 L464.5 340.5 L465.0 342.5 L465.5 344.9 L466.0 344.9 L466.5 344.2 L467.0 346.0 L467.5 348.8 L468.0 351.2 L468.5 351.3 L469.0 352.7 L469.5 354.9 L470.0 355.5 L470.5 355.4 L471.0 356.7 L471.5 358.7 L472.0 358.3 L472.5 358.5 L473.0 361.0 L473.5 363.2 L474.0 364.6 L474.5 366.2 L475.0 365.1 L475.5 366.1 L476.0 367.1 L476.5 366.6 L477.0 369.3 L477.5 369.8 L478.0 369.1 L478.5 369.4 L479.0 371.4 L479.5 369.0 L480.0 370.3 L480.5 368.1 L481.0 367.8 L481.5 366.4 L482.0 366.0 L482.5 365.8 L483.0 364.7 L483.5 363.4 L484.0 364.4 L484.5 361.6 L485.0 362.0 L485.5 362.1 L486.0 362.3 L486.5 359.0 L487.0 359.3 L487.5 360.4 L488.0 358.8 L488.5 358.1 L489.0 356.6 L489.5 354.5 L490.0 353.2 L490.5 352.2 L491.0 351.9 L491.5 351.5 L492.0 350.7 L492.5 349.3 L493.0 346.8 L493.5 346.9 L494.0 344.6 L494.5 343.2 L495.0 344.9 L495.5 342.1 L496.0 342.8 L496.5 341.8 L497.0 339.6 L497.5 338.7 L498.0 338.7 L498.5 335.1 L499.0 335.3 L499.5 336.4 L500.0 333.6 L500.5 332.7 L501.0 331.9 L501.5 332.3 L502.0 329.8 L502.5 327.9 L503.0 329.0 L503.5 329.1 L504.0 327.8 L504.5 326.2 L505.0 326.8 L505.5 325.0 L506.0 325.9 L506.5 324.5 L507.0 322.0 L507.5 321.0 L508.0 320.9 L508.5 322.3 L509.0 321.3 L509.5 321.8 L510.0 322.1 L510.5 324.3 L511.0 325.5 L511.5 325.7 L512.0 326.2 L512.5 326.0 L513.0 328.5 L513.5 328.2 L514.0 331.1 L514.5 330.0 L515.0 332.6 L515.5 332.8 L516.0 334.6 L516.5 334.4 L517.0 335.5 L517.5 334.7 L518.0 336.6 L518.5 338.3 L519.0 339.8 L519.5 339.9 L520.0 341.6 L520.5 343.2 L521.0 345.8 L521.5 346.4 L522.0 347.2 L522.5 348.8 L523.0 347.3 L523.5 349.9 L524.0 350.2 L524.5 352.6 L525.0 351.6 L525.5 355.3 L526.0 356.2 L526.5 357.4 L527.0 357.4 L527.5 359.4 L528.0 360.5 L528.5 360.2 L529.0 362.3 L529.5 363.6 L530.0 363.3 L530.5 363.1 L531.0 366.8 L531.5 366.1 L532.0 368.1 L532.5 365.8 L533.0 368.1 L533.5 368.0 L534.0 370.0 L534.5 370.5 L535.0 371.5 L535.5 373.1 L536.0 372.7 L536.5 371.9 L537.0 371.9 L537.5 370.6 L538.0 371.9 L538.5 371.1 L539.0 368.3 L539.5 369.9 L540.0 367.0 L540.5 366.2 L541.0 366.4 L541.5 367.8 L542.0 365.5 L542.5 363.7 L543.0 364.1 L543.5 362.2 L544.0 363.8 L544.5 362.2 L545.0 359.2 L545.5 359.6 L546.0 357.5 L546.5 359.1 L547.0 355.4 L547.5 353.9 L548.0 353.0 L548.5 355.1 L549.0 352.0 L549.5 352.2 L550.0 349.6 L550.5 351.6 L551.0 350.4 L551.5 348.0 L552.0 345.4 L552.5 346.7 L553.0 344.0 L553.5 344.6 L554.0 341.2 L554.5 341.7 L555.0 342.1 L555.5 341.1 L556.0 339.4 L556.5 336.8 L557.0 337.4 L557.5 334.8 L558.0 334.7 L558.5 334.7 L559.0 332.2 L559.5 332.1 L560.0 330.1 L560.5 327.4 L561.0 326.5 L561.5 326.1 L562.0 327.2 L562.5 327.1 L563.0 325.1 L563.5 324.7 L564.0 323.4 L564.5 323.9 L565.0 324.2 L565.5 321.3 L566.0 322.4 L566.5 320.2 L567.0 319.8 L567.5 318.8 L568.0 321.5 L568.5 318.8 L569.0 319.9 L569.5 321.5 L570.0 323.9 L570.5 322.3 L571.0 325.3 L571.5 326.0 L572.0 326.8 L572.5 324.5 L573.0 328.0 L573.5 328.9 L574.0 329.6 L574.5 330.1 L575.0 332.6 L575.5 334.3 L576.0 335.8 L576.5 335.3 L577.0 339.0 L577.5 339.9 L578.0 340.2 L578.5 343.4 L579.0 343.1 L579.5 345.8 L580.0 347.7 L580.5 348.2 L581.0 351.1 L581.5 353.4 L582.0 354.0 L582.5 354.7 L583.0 356.0 L583.5 356.7 L584.0 359.7 L584.5 362.1 L585.0 361.1 L585.5 362.6 L586.0 363.7 L586.5 365.4 L587.0 365.7 L587.5 367.2 L588.0 367.0 L588.5 370.7 L589.0 368.2 L589.5 371.2 L590.0 370.8 L590.5 372.0 L591.0 374.7 L591.5 374.2 L592.0 374.9 L592.5 374.5 L593.0 374.3 L593.5 373.2 L594.0 375.4 L594.5 372.7 L595.0 373.0 L595.5 372.4 L596.0 371.7 L596.5 370.8 L597.0 370.1 L597.5 370.5 L598.0 368.8 L598.5 365.9 L599.0 366.5 L599.5 366.4 L600.0 362.9 L600.5 363.9 L601.0 361.1 L601.5 362.8 L602.0 360.1 L602.5 358.7 L603.0 358.6 L603.5 355.8 L604.0 357.7 L604.5 355.6 L605.0 352.0 L605.5 352.5 L606.0 351.7 L606.5 349.9 L607.0 351.0 L607.5 348.6 L608.0 348.7 L608.5 346.5 L609.0 347.3 L609.5 344.0 L610.0 343.4 L610.5 342.9 L611.0 340.5 L611.5 340.7 L612.0 339.2 L612.5 337.7 L613.0 335.7 L613.5 336.2 L614.0 333.8 L614.5 333.0 L615.0 333.4 L615.5 332.5 L616.0 329.7 L616.5 330.0 L617.0 329.1 L617.5 328.5 L618.0 326.1 L618.5 325.7 L619.0 325.3 L619.5 326.0 L620.0 325.7 L620.5 323.7 L621.0 323.6 L621.5 324.2 L622.0 321.5 L622.5 322.8 L623.0 321.2 L623.5 318.8 L624.0 319.5 L624.5 321.1 L625.0 319.2 L625.5 319.7 L626.0 322.0 L626.5 322.5 L627.0 322.9 L627.5 323.6 L628.0 325.8 L628.5 325.7 L629.0 328.8 L629.5 329.3 L630.0 329.7 L630.5 330.4 L631.0 332.9 L631.5 334.7 L632.0 337.1 L632.5 337.1 L633.0 337.4 L633.5 339.4 L634.0 341.7 L634.5 343.4 L635.0 342.9 L635.5 344.4 L636.0 346.1 L636.5 348.2 L637.0 348.9 L637.5 351.2 L638.0 352.7 L638.5 352.2 L639.0 355.2 L639.5 356.9 L640.0 360.1 L640.5 359.9 L641.0 362.3 L641.5 361.4 L642.0 363.6 L642.5 365.6 L643.0 364.0 L643.5 366.8 L644.0 366.3 L644.5 370.2 L645.0 368.3 L645.5 370.4 L646.0 372.7 L646.5 372.5 L647.0 372.5 L647.5 375.6 L648.0 374.0 L648.5 375.8 L649.0 375.3 L649.5 373.2 L650.0 374.2 L650.5 372.1 L651.0 370.4 L651.5 373.2 L652.0 370.7 L652.5 369.5 L653.0 367.2 L653.5 366.5 L654.0 367.5 L654.5 367.0 L655.0 366.5 L655.5 367.1 L656.0 365.6 L656.5 363.9 L657.0 364.1 L657.5 361.3 L658.0 362.0 L658.5 359.8 L659.0 359.1 L659.5 358.3 L660.0 358.2 L660.5 356.0 L661.0 356.1 L661.5 353.1 L662.0 352.9 L662.5 350.5 L663.0 350.6 L663.5 349.1 L664.0 349.3 L664.5 347.0 L665.0 346.2 L665.5 344.8 L666.0 342.5 L666.5 343.4 L667.0 341.9 L667.5 342.7 L668.0 340.4 L668.5 338.2 L669.0 336.7 L669.5 337.5 L670.0 336.0 L670.5 336.0 L671.0 333.5 L671.5 332.1 L672.0 333.5 L672.5 332.9 L673.0 330.2 L673.5 329.3 L674.0 329.2 L674.5 327.6 L675.0 330.1 L675.5 329.1 L676.0 325.4 L676.5 326.6 L677.0 325.4 L677.5 325.9 L678.0 323.7 L678.5 325.0 L679.0 321.9 L679.5 323.1 L680.0 321.7 L680.5 320.6 L681.0 322.9 L681.5 322.0 L682.0 323.6 L682.5 325.2 L683.0 324.5 L683.5 326.2 L684.0 328.5 L684.5 327.5 L685.0 328.2 L685.5 331.6 L686.0 331.0 L686.5 332.1 L687.0 332.1 L687.5 336.1 L688.0 336.2 L688.5 337.2 L689.0 336.6 L689.5 340.3 L690.0 340.5 L690.5 340.2 L691.0 342.8 L691.5 345.1 L692.0 347.1 L692.5 348.3 L693.0 350.9 L693.5 350.5 L694.0 353.4 L694.5 356.1 L695.0 357.9 L695.5 357.6 L696.0 358.9 L696.5 359.8 L697.0 360.8 L697.5 360.6 L698.0 364.1 L698.5 366.3 L699.0 367.8 L699.5 367.7 L700.0 370.2 L700.5 370.7 L701.0 372.6 L701.5 373.5 L702.0 372.1 L702.5 373.2 L703.0 377.0 L703.5 376.6 L704.0 377.0 L704.5 377.0 L705.0 378.7 L705.5 376.9 L706.0 376.6 L706.5 378.3 L707.0 375.1 L707.5 375.2 L708.0 375.6 L708.5 374.1 L709.0 374.6 L709.5 374.2 L710.0 373.8 L710.5 370.2 L711.0 371.3 L711.5 369.9 L712.0 368.3 L712.5 368.7 L713.0 367.2 L713.5 363.8 L714.0 362.3 L714.5 362.2 L715.0 361.0 L715.5 362.1 L716.0 361.5 L716.5 359.0 L717.0 359.0 L717.5 357.6 L718.0 356.5 L718.5 353.5 L719.0 352.4 L719.5 352.6 L720.0 350.8 L720.5 351.6 L721.0 350.0 L721.5 347.9 L722.0 348.0 L722.5 345.8 L723.0 345.9 L723.5 344.6 L724.0 341.9 L724.5 341.3 L725.0 342.3 L725.5 338.9 L726.0 339.6 L726.5 338.1 L727.0 335.8 L727.5 334.3 L728.0 334.8 L728.5 334.4 L729.0 332.2 L729.5 332.9 L730.0 331.7 L730.5 330.6 L731.0 327.8 L731.5 329.4 L732.0 328.8 L732.5 327.0 L733.0 328.3 L733.5 327.2 L734.0 324.5 L734.5 323.6 L735.0 324.9 L735.5 323.2 L736.0 322.1 L736.5 324.4 L737.0 324.5 L737.5 324.7 L738.0 326.1 L738.5 328.3 L739.0 328.0 L739.5 329.0 L740.0 331.4 L740.5 331.5 L741.0 332.0 L741.5 331.5 L742.0 332.8 L742.5 332.6 L743.0 334.1 L743.5 337.3 L744.0 335.6 L744.5 338.5 L745.0 337.7 L745.5 340.7 L746.0 342.6 L746.5 341.7 L747.0 342.8 L747.5 346.2 L748.0 344.6 L748.5 346.9 L749.0 349.8 L749.5 351.7 L750.0 352.8 L750.5 352.2 L751.0 354.4 L751.5 352.8 L752.0 355.4 L752.5 354.9 L753.0 357.5 L753.5 359.7 L754.0 358.8 L754.5 360.7 L755.0 363.1 L755.5 361.3 L756.0 364.6 L756.5 364.2 L757.0 364.3 L757.5 365.5 L758.0 366.8 L758.5 368.7 L759.0 368.0 L759.5 368.7 L760.0 370.5 L760.5 369.6 L761.0 369.5 L761.5 370.0 L762.0 368.5 L762.5 365.1 L763.0 365.7 L763.5 364.3 L764.0 365.7 L764.5 361.8 L765.0 362.8 L765.5 363.8 L766.0 362.0 L766.5 359.0 L767.0 358.1 L767.5 356.4 L768.0 358.9 L768.5 357.2 L769.0 355.6 L769.5 355.4 L770.0 354.1 L770.5 355.0 L771.0 352.2 L771.5 350.4 L772.0 351.7 L772.5 348.5 L773.0 350.6 L773.5 349.7" stroke="#1c80d8" stroke-width="1.1" fill="none"/>
 <path d="M94 548.5 V548.5 H95 V548.5 H96 V547.5 H97 V547.5 H98 V547.5 H99 V547.5 H100 V547.5 H101 V547.5 H102 V547.5 H103 V547.5 H104 V547.5 H105 V547.5 H106 V547.5 H107 V546.5 H108 V546.5 H109 V546.5 H110 V547.5 H111 V547.5 H112 V547.5 H113 V547.5 H114 V547.5 H115 V547.5 H116 V547.5 H117 V548.5 H118 V548.5 H119 V548.5 H120 V548.5 H121 V548.5 H122 V549.5 H123 V549.5 H124 V549.5 H125 V549.5 H126 V548.5 H127 V548.5 H128 V548.5 H129 V548.5 H130 V548.5 H131 V548.5 H132 V548.5 H133 V548.5 H134 V548.5 H135 V548.5 H136 V547.5 H137 V547.5 H138 V547.5 H139 V546.5 H140 V546.5 H141 V546.5 H142 V546.5 H143 V546.5 H144 V546.5 H145 V546.5 H146 V546.5 H147 V546.5 H148 V546.5 H149 V546.5 H150 V546.5 H151 V546.5 H152 V546.5 H153 V546.5 H154 V546.5 H155 V546.5 H156 V546.5 H157 V546.5 H158 V546.5 H159 V546.5 H160 V546.5 H161 V546.5 H162 V547.5 H163 V547.5 H164 V547.5 H165 V547.5 H166 V547.5 H167 V547.5 H168 V547.5 H169 V547.5 H170 V548.5 H171 V548.5 H172 V547.5 H173 V547.5 H174 V547.5 H175 V546.5 H176 V546.5 H177 V546.5 H178 V546.5 H179 V546.5 H180 V546.5 H181 V547.5 H182 V546.5 H183 V546.5 H184 V546.5 H185 V546.5 H186 V547.5 H187 V547.5 H188 V548.5 H189 V547.5 H190 V547.5 H191 V547.5 H192 V546.5 H193 V546.5 H194 V547.5 H195 V547.5 H196 V548.5 H197 V548.5 H198 V547.5 H199 V547.5 H200 V545.5 H201 V545.5 H202 V545.5 H203 V545.5 H204 V545.5 H205 V544.5 H206 V544.5 H207 V545.5 H208 V545.5 H209 V545.5 H210 V545.5 H211 V545.5 H212 V546.5 H213 V546.5 H214 V546.5 H215 V548.5 H216 V548.5 H217 V548.5 H218 V548.5 H219 V548.5 H220 V548.5 H221 V549.5 H222 V549.5 H223 V548.5 H224 V548.5 H225 V548.5 H226 V549.5 H227 V549.5 H228 V549.5 H229 V549.5 H230 V549.5 H231 V549.5 H232 V549.5 H233 V549.5 H234 V548.5 H235 V547.5 H236 V547.5 H237 V547.5 H238 V547.5 H239 V547.5 H240 V548.5 H241 V548.5 H242 V548.5 H243 V548.5 H244 V548.5 H245 V548.5 H246 V548.5 H247 V548.5 H248 V548.5 H249 V548.5 H250 V548.5 H251 V548.5 H252 V548.5 H253 V548.5 H254 V548.5 H255 V548.5 H256 V548.5 H257 V548.5 H258 V548.5 H259 V549.5 H260 V549.5 H261 V549.5 H262 V549.5 H263 V549.5 H264 V549.5 H265 V549.5 H266 V549.5 H267 V549.5 H268 V549.5 H269 V548.5 H270 V548.5 H271 V548.5 H272 V548.5 H273 V548.5 H274 V547.5 H275 V547.5 H276 V547.5 H277 V547.5 H278 V548.5 H279 V548.5 H280 V548.5 H281 V547.5 H282 V547.5 H283 V548.5 H284 V548.5 H285 V548.5 H286 V548.5 H287 V548.5 H288 V548.5 H289 V548.5 H290 V548.5 H291 V548.5 H292 V547.5 H293 V547.5 H294 V547.5 H295 V547.5 H296 V547.5 H297 V547.5 H298 V547.5 H299 V547.5 H300 V547.5 H301 V548.5 H302 V548.5 H303 V548.5 H304 V548.5 H305 V548.5 H306 V548.5 H307 V547.5 H308 V547.5 H309 V547.5 H310 V547.5 H311 V547.5 H312 V548.5 H313 V547.5 H314 V547.5 H315 V547.5 H316 V547.5 H317 V547.5 H318 V547.5 H319 V548.5 H320 V550.5 H321 V550.5 H322 V550.5 H323 V550.5 H324 V550.5 H325 V550.5 H326 V550.5 H327 V550.5 H328 V550.5 H329 V550.5 H330 V550.5 H331 V550.5 H332 V550.5 H333 V550.5 H334 V550.5 H335 V550.5 H336 V550.5 H337 V550.5 H338 V550.5 H339 V549.5 H340 V549.5 H341 V549.5 H342 V549.5 H343 V548.5 H344 V548.5 H345 V549.5 H346 V549.5 H347 V549.5 H348 V549.5 H349 V550.5 H350 V550.5 H351 V549.5 H352 V549.5 H353 V549.5 H354 V549.5 H355 V549.5 H356 V548.5 H357 V548.5 H358 V548.5 H359 V548.5 H360 V548.5 H361 V548.5 H362 V549.5 H363 V549.5 H364 V549.5 H365 V549.5 H366 V550.5 H367 V550.5 H368 V550.5 H369 V550.5 H370 V550.5 H371 V550.5 H372 V550.5 H373 V549.5 H374 V549.5 H375 V549.5 H376 V549.5 H377 V549.5 H378 V549.5 H379 V549.5 H380 V548.5 H381 V548.5 H382 V548.5 H383 V548.5 H384 V549.5 H385 V549.5 H386 V550.5 H387 V549.5 H388 V549.5 H389 V549.5 H390 V549.5 H391 V549.5 H392 V548.5 H393 V549.5 H394 V549.5 H395 V549.5 H396 V549.5 H397 V548.5 H398 V548.5 H399 V548.5 H400 V548.5 H401 V548.5 H402 V548.5 H403 V548.5 H404 V549.5 H405 V549.5 H406 V549.5 H407 V550.5 H408 V550.5 H409 V550.5 H410 V551.5 H411 V551.5 H412 V551.5 H413 V551.5 H414 V550.5 H415 V550.5 H416 V550.5 H417 V551.5 H418 V551.5 H419 V551.5 H420 V552.5 H421 V552.5 H422 V551.5 H423 V550.5 H424 V550.5 H425 V550.5 H426 V549.5 H427 V549.5 H428 V549.5 H429 V550.5 H430 V550.5 H431 V550.5 H432 V550.5 H433 V550.5 H434 V552.5 H435 V552.5 H436 V552.5 H437 V552.5 H438 V553.5 H439 V553.5 H440 V552.5 H441 V552.5 H442 V552.5 H443 V552.5 H444 V552.5 H445 V552.5 H446 V552.5 H447 V551.5 H448 V550.5 H449 V550.5 H450 V551.5 H451 V551.5 H452 V551.5 H453 V551.5 H454 V551.5 H455 V551.5 H456 V551.5 H457 V551.5 H458 V551.5 H459 V551.5 H460 V551.5 H461 V551.5 H462 V551.5 H463 V551.5 H464 V551.5 H465 V551.5 H466 V551.5 H467 V551.5 H468 V551.5 H469 V552.5 H470 V552.5 H471 V552.5 H472 V552.5 H473 V551.5 H474 V551.5 H475 V551.5 H476 V551.5 H477 V551.5 H478 V551.5 H479 V551.5 H480 V551.5 H481 V551.5 H482 V551.5 H483 V551.5 H484 V551.5 H485 V551.5 H486 V551.5 H487 V551.5 H488 V551.5 H489 V551.5 H490 V552.5 H491 V552.5 H492 V552.5 H493 V552.5 H494 V552.5 H495 V551.5 H496 V551.5 H497 V551.5 H498 V551.5 H499 V552.5 H500 V552.5 H501 V551.5 H502 V551.5 H503 V550.5 H504 V550.5 H505 V550.5 H506 V550.5 H507 V550.5 H508 V550.5 H509 V550.5 H510 V550.5 H511 V549.5 H512 V549.5 H513 V549.5 H514 V549.5 H515 V549.5 H516 V549.5 H517 V549.5 H518 V549.5 H519 V549.5 H520 V549.5 H521 V549.5 H522 V549.5 H523 V549.5 H524 V549.5 H525 V549.5 H526 V549.5 H527 V549.5 H528 V549.5 H529 V549.5 H530 V550.5 H531 V550.5 H532 V550.5 H533 V550.5 H534 V550.5 H535 V550.5 H536 V550.5 H537 V550.5 H538 V550.5 H539 V550.5 H540 V550.5 H541 V550.5 H542 V550.5 H543 V549.5 H544 V549.5 H545 V549.5 H546 V550.5 H547 V551.5 H548 V551.5 H549 V551.5 H550 V551.5 H551 V551.5 H552 V551.5 H553 V551.5 H554 V551.5 H555 V551.5 H556 V550.5 H557 V550.5 H558 V550.5 H559 V550.5 H560 V550.5 H561 V550.5 H562 V550.5 H563 V550.5 H564 V550.5 H565 V550.5 H566 V550.5 H567 V550.5 H568 V550.5 H569 V550.5 H570 V550.5 H571 V550.5 H572 V551.5 H573 V551.5 H574 V551.5 H575 V551.5 H576 V551.5 H577 V551.5 H578 V552.5 H579 V552.5 H580 V552.5 H581 V552.5 H582 V552.5 H583 V552.5 H584 V552.5 H585 V552.5 H586 V552.5 H587 V552.5 H588 V553.5 H589 V553.5 H590 V553.5 H591 V552.5 H592 V552.5 H593 V551.5 H594 V550.5 H595 V551.5 H596 V551.5 H597 V551.5 H598 V551.5 H599 V550.5 H600 V550.5 H601 V550.5 H602 V551.5 H603 V551.5 H604 V551.5 H605 V551.5 H606 V551.5 H607 V551.5 H608 V551.5 H609 V550.5 H610 V550.5 H611 V550.5 H612 V550.5 H613 V550.5 H614 V550.5 H615 V550.5 H616 V550.5 H617 V550.5 H618 V550.5 H619 V551.5 H620 V551.5 H621 V551.5 H622 V550.5 H623 V550.5 H624 V550.5 H625 V550.5 H626 V551.5 H627 V551.5 H628 V551.5 H629 V550.5 H630 V551.5 H631 V551.5 H632 V551.5 H633 V551.5 H634 V551.5 H635 V552.5 H636 V552.5 H637 V552.5 H638 V552.5 H639 V552.5 H640 V553.5 H641 V553.5 H642 V553.5 H643 V553.5 H644 V553.5 H645 V553.5 H646 V552.5 H647 V552.5 H648 V552.5 H649 V552.5 H650 V552.5 H651 V552.5 H652 V552.5 H653 V552.5 H654 V552.5 H655 V552.5 H656 V552.5 H657 V552.5 H658 V552.5 H659 V552.5 H660 V553.5 H661 V553.5 H662 V553.5 H663 V553.5 H664 V553.5 H665 V553.5 H666 V553.5 H667 V554.5 H668 V553.5 H669 V553.5 H670 V553.5 H671 V553.5 H672 V553.5 H673 V553.5 H674 V554.5 H675 V555.5 H676 V555.5 H677 V555.5 H678 V555.5 H679 V554.5 H680 V554.5 H681 V554.5 H682 V553.5 H683 V553.5 H684 V553.5 H685 V553.5 H686 V553.5 H687 V553.5 H688 V553.5 H689 V553.5 H690 V553.5 H691 V553.5 H692 V554.5 H693 V555.5 H694 V554.5 H695 V554.5 H696 V554.5 H697 V554.5 H698 V553.5 H699 V553.5 H700 V554.5 H701 V554.5 H702 V555.5 H703 V555.5 H704 V555.5 H705 V555.5 H706 V554.5 H707 V554.5 H708 V554.5 H709 V554.5 H710 V554.5 H711 V554.5 H712 V554.5 H713 V554.5 H714 V554.5 H715 V554.5 H716 V554.5 H717 V554.5 H718 V554.5 H719 V554.5 H720 V554.5 H721 V555.5 H722 V555.5 H723 V555.5 H724 V555.5 H725 V555.5 H726 V555.5 H727 V555.5 H728 V555.5 H729 V554.5 H730 V553.5 H731 V553.5 H732 V554.5 H733 V554.5 H734 V555.5 H735 V555.5 H736 V555.5 H737 V555.5 H738 V555.5 H739 V555.5 H740 V555.5 H741 V555.5 H742 V555.5 H743 V555.5 H744 V554.5 H745 V554.5 H746 V554.5 H747 V555.5 H748 V555.5 H749 V555.5 H750 V555.5 H751 V555.5 H752 V555.5 H753 V555.5 H754 V555.5 H755 V555.5 H756 V555.5 H757 V555.5 H758 V555.5 H759 V554.5 H760 V555.5 H761 V555.5 H762 V555.5 H763 V555.5 H764 V555.5 H765 V555.5 H766 V555.5 H767 V554.5 H768 V554.5 H769 V554.5 H770 V554.5 H771 V554.5 H772 V554.5 H773" stroke="#e60000" stroke-width="1.6" fill="none" shape-rendering="crispEdges"/>
 <path d="M408 551.5H411 M646 554.5H653 M150 547.5H154 M421 551.5H424 M654 553.5H659 M575 552.5H580 M442 553.5H446 M159 545.5H161 M428 548.5H430 M326 549.5H330 M723 557.5H725 M147 548.5H150 M749 556.5H754 M582 553.5H587 M747 556.5H754 M420 552.5H424 M454 550.5H460 M708 553.5H714 M589 555.5H594 M106 548.5H113 M306 549.5H309 M649 551.5H653 M764 554.5H770 M566 552.5H572 M118 549.5H125 M533 551.5H535 M630 551.5H634 M197 547.5H200 M318 549.5H322 M255 547.5H260 M520 550.5H523 M403 549.5H407 M597 550.5H603 M240 549.5H246 M668 555.5H671 M111 546.5H118 M676 554.5H680 M150 545.5H153 M608 552.5H615 M617 551.5H622 M667 554.5H670 M250 550.5H257 M125 550.5H130 M710 555.5H717 M712 555.5H716 M524 551.5H527 M149 545.5H151 M442 553.5H449 M336 551.5H342 M331 551.5H337 M331 551.5H337 M300 546.5H306 M567 551.5H574 M373 549.5H378 M594 553.5H596 M182 549.5H184 M239 549.5H243 M269 550.5H276 M650 554.5H654 M345 549.5H348 M259 549.5H264 M727 556.5H732 M411 552.5H414 M550 552.5H552 M291 549.5H297 M221 549.5H227 M282 549.5H287 M544 551.5H550 M578 553.5H582 M624 552.5H627 M700 554.5H706 M606 552.5H609 M169 549.5H173 M165 546.5H170 M456 553.5H463 M437 554.5H441 M754 557.5H757 M680 553.5H686 M136 550.5H143 M456 553.5H462 M536 551.5H542 M254 547.5H260 M242 549.5H249 M502 552.5H506 M442 554.5H445 M760 555.5H763 M212 544.5H215 M725 557.5H729 M545 550.5H550 M466 550.5H472 M452.5 550.0V554.0 M656.5 551.0V555.0 M638.5 551.0V555.0 M426.5 549.0V553.0 M748.5 554.0V558.0 M582.5 551.0V555.0 M213.5 545.0V549.0 M434.5 549.0V553.0 M354.5 548.0V552.0 M490.5 550.0V554.0 M718.5 553.0V557.0 M717.5 553.0V557.0 M672.5 552.0V556.0 M360.5 547.0V551.0 M111.5 546.0V550.0 M473.5 551.0V555.0 M491.5 551.0V555.0 M162.5 545.0V549.0 M465.5 550.0V554.0 M737.5 554.0V558.0 M645.5 552.0V556.0 M106.5 546.0V550.0 M376.5 548.0V552.0 M434.5 549.0V553.0 M388.5 548.0V552.0 M600.5 549.0V553.0 M258.5 547.0V551.0 M480.5 550.0V554.0 M116.5 546.0V550.0 M171.5 547.0V551.0 M291.5 547.0V551.0 M308.5 546.0V550.0 M154.5 545.0V549.0 M237.5 546.0V550.0 M244.5 547.0V551.0 M412.5 550.0V554.0 M327.5 549.0V553.0 M318.5 546.0V550.0 M152.5 545.0V549.0 M541.5 549.0V553.0 M364.5 548.0V552.0 M218.5 547.0V551.0 M203.5 544.0V548.0 M241.5 547.0V551.0 M658.5 551.0V555.0 M658.5 551.0V555.0 M185.5 545.0V549.0 M246.5 547.0V551.0 M538.5 549.0V553.0 M291.5 547.0V551.0 M134.5 547.0V551.0 M602.5 549.0V553.0 M489.5 550.0V554.0 M526.5 548.0V552.0 M189.5 547.0V551.0 M738.5 554.0V558.0 M277.5 546.0V550.0 M705.5 554.0V558.0 M223.5 548.0V552.0 M402.5 547.0V551.0 M133.5 547.0V551.0 M180.5 545.0V549.0 M151.5 545.0V549.0 M258.5 547.0V551.0 M221.5 547.0V551.0 M133.5 547.0V551.0 M116.5 546.0V550.0 M429.5 548.0V552.0 M739.5 554.0V558.0 M266.5 548.0V552.0" stroke="#e60000" stroke-width="1" fill="none" shape-rendering="crispEdges"/>
</svg>
<div class="yl" style="left:78px;top:107px;width:auto">Y1</div>
<div class="yl" style="top:119px;text-align:right;width:42px">-50.0</div>
<div class="yl" style="top:187px;text-align:right;width:42px">-55.0</div>
<div class="yl" style="top:255px;text-align:right;width:42px">-60.0</div>
<div class="yl" style="top:323px;text-align:right;width:42px">-65.0</div>
<div class="yl" style="top:391px;text-align:right;width:42px">-70.0</div>
<div class="yl" style="top:458px;text-align:right;width:42px">-75.0</div>
<div class="yl" style="top:526px;text-align:right;width:42px">-80.0</div>
<div class="yl" style="top:594px;text-align:right;width:42px">-85.0</div>
<div class="yl" style="top:662px;text-align:right;width:42px">-90.0</div>
<div class="yl" style="top:730px;text-align:right;width:42px">-95.0</div>
<div class="yl" style="top:797px;text-align:right;width:42px">-100.0</div>
<div class="xl" style="left:99px">2026/04/14
14:59:10.5</div>
<div class="xl" style="left:212px">2026/04/14
17:07:34.0</div>
<div class="xl" style="left:325px">2026/04/14
19:15:57.5</div>
<div class="xl" style="left:438px">2026/04/14
21:24:21.0</div>
<div class="xl" style="left:551px">2026/04/14
23:32:44.5</div>
<div class="xl" style="left:664px">2026/04/15
1:41:08.0</div>
<div class="xl" style="left:778px">2026/04/15
3:49:31.5</div>
<div class="lg" style="left:31px;color:#800000">Comp-low
CH1 [°C]
-----</div>
<div class="lg" style="left:168px;color:#808000">Comp-High
CH2 [°C]
-----</div>
<div class="lg" style="left:305px;color:#1c80d8">MDF-330-2(-50)
CH3 [°C]
-66.4</div>
<div class="lg" style="left:442px;color:#20c020">
CH4 []
-----</div>
<div class="lg" style="left:579px;color:#000">MDF-190
CH5 [°C]
-62.2</div>
<div class="lg" style="left:716px;color:#c00000">2110Temp
CH6 [mV]
-81.6</div>


<!-- ============ bottom panel ============ -->
<div class="a" style="left:23px;top:933px;width:839px;height:40px;border-top:1px solid #fff;border-left:1px solid #fff;border-right:1px solid #808080;border-bottom:1px solid #808080"></div>
<div class="btn" style="left:31px;top:941px;width:82px;height:26px"><span class="a" style="left:7px;top:5px;white-space:pre;letter-spacing:-1.2px;font-size:13px">&#xFF71;&#xFF97;&#xFF70;&#xFF91;&#xFF98;&#xFF7E;&#xFF6F;&#xFF84;</span></div>
<div class="sunk" style="left:119px;top:941px;width:734px;height:26px;background:#fff"></div>
<div class="btn" style="left:835px;top:943px;width:16px;height:22px"><svg class="a" style="left:3px;top:7px" width="9" height="6"><path d="M0 0H9L4.5 5Z"/></svg></div>
<!-- status bar -->
<div class="thin-dn" style="left:15px;top:988px;width:151px;height:19px"><span class="a" style="left:1px;top:2px;white-space:pre"><span class="jf">保存</span><span class="jh">ｳｪｲﾄ</span><span class="jf">！！</span></span></div>
<div class="thin-dn" style="left:167px;top:988px;width:703px;height:19px"></div>
<svg class="a" style="left:856px;top:993px" width="13" height="13"><path d="M12 1L1 12M12 5L5 12M12 9L9 12" stroke="#808080" stroke-width="1.2"/><path d="M12 2L2 12M12 6L6 12M12 10L10 12" stroke="#fff" stroke-width="0.8"/></svg>


<!-- ============ taskbar ============ -->
<div class="a face" style="left:0;top:1020px;width:1680px;height:30px;border-top:1px solid #d4d0c8;box-shadow:inset 0 1px #fff"></div>
<div class="btn" style="left:2px;top:1024px;width:62px;height:22px"><svg class="a" style="left:3px;top:3px" width="16" height="15"><path d="M1 3Q4 1 7 3V7Q4 5 1 7Z" fill="#e8501a"/><path d="M8 3Q11 5 14 3V7Q11 9 8 7Z" fill="#4caf2a"/><path d="M1 8Q4 6 7 8V12Q4 10 1 12Z" fill="#2a6ad8"/><path d="M8 8Q11 10 14 8V12Q11 14 8 12Z" fill="#f4c020"/></svg><span class="a t0" style="left:21px;top:3px;font-weight:bold;white-space:pre;font-size:11.5px"><span class="jf">スタート</span></span></div>
<svg class="a" style="left:72px;top:1027px" width="64" height="17">
 <circle cx="8" cy="9" r="6" fill="#3a8ee0"/><path d="M4 9H12M5 7Q8 4 11 7" stroke="#fff" stroke-width="1.5" fill="none"/><path d="M1 12Q8 -2 15 4" stroke="#6ab0f0" stroke-width="1.2" fill="none"/>
 <rect x="22" y="2" width="13" height="13" rx="3" fill="#2a70d8"/><rect x="25" y="5" width="7" height="7" fill="#fff"/><path d="M26 11L31 5" stroke="#e02020" stroke-width="1.5"/>
 <path d="M45 5H50L52 7H59V15H45Z" fill="#f0c050" stroke="#a07010" stroke-width="0.8"/><circle cx="52" cy="10" r="3" fill="#bde" stroke="#456"/>
</svg>
<div class="btn" style="left:142px;top:1024px;width:159px;height:22px"><div class="a" style="left:4px;top:4px;width:16px;height:12px;background:#000;border:1px solid #3050a0"><span class="a" style="left:1px;top:-1px;color:#fff;font-size:8px;font-weight:bold">C:\</span></div><span class="a t0" style="left:23px;top:3px;white-space:pre;font-size:11.5px">transfile.cmd <span class="jf">への</span><span class="jh">ｼｮｰﾄ</span>...</span></div>
<div class="btn" style="left:305px;top:1024px;width:159px;height:22px"><svg class="a" style="left:4px;top:2px" width="18" height="17"><rect x="6" y="2" width="11" height="10" fill="#dde" stroke="#556"/><path d="M2 2L9 14" stroke="#c03030" stroke-width="2"/><path d="M1 12Q8 18 15 13" stroke="#d04040" stroke-width="2" fill="none"/><rect x="9" y="6" width="6" height="5" fill="#5a8"/></svg><span class="a" style="left:23px;top:3px;white-space:pre;font-size:11px">PhotoImpression 2000</span></div>
<div class="a" style="left:467px;top:1024px;width:160px;height:22px;border-top:1px solid #404040;border-left:1px solid #404040;border-right:1px solid #fff;border-bottom:1px solid #fff;box-shadow:inset 1px 1px #808080;background-color:#fff;background-image:repeating-conic-gradient(#d4d0c8 0% 25%,#fff 0% 50%);background-size:2px 2px"><div class="a" style="left:4px;top:3px;width:16px;height:16px;background:#fff;border:1px solid #333"><div class="a" style="left:1px;top:1px;width:12px;height:6px;background:linear-gradient(#f0b0f0,#b0e0b0)"></div><div class="a" style="left:1px;top:9px;width:3px;height:4px;background:#e00"></div><div class="a" style="left:5px;top:9px;width:3px;height:4px;background:#00c"></div><div class="a" style="left:9px;top:9px;width:3px;height:4px;background:#0c0"></div></div><span class="a t0" style="left:25px;top:4px;font-weight:bold;white-space:pre"><span class="jf">ソフトサーモ　</span>E830</span></div>
<!-- tray -->
<svg class="a" style="left:1547px;top:1029px" width="14" height="14"><path d="M5 1Q7 3 9 1" stroke="#000" fill="none"/><rect x="1" y="6" width="12" height="7" fill="#fff" stroke="#000"/><path d="M3 8.5H11M3 10.5H11" stroke="#000" stroke-dasharray="1 1"/></svg>
<div class="a" style="left:1564px;top:1024px;width:113px;height:23px;border-top:1px solid #808080;border-left:1px solid #808080;border-right:1px solid #fff;border-bottom:1px solid #fff"></div>
<svg class="a" style="left:1567px;top:1027px" width="78" height="18">
 <path d="M7 2L13 4V9Q13 14 7 17Q1 14 1 9V4Z" fill="#f0e020" stroke="#6070a0"/><path d="M7 6V11M7 12.5V14" stroke="#000" stroke-width="1.5"/>
 <path d="M25 2L31 4V9Q31 14 25 17Q19 14 19 9V4Z" fill="#d02030" stroke="#6070a0"/><path d="M22.5 7.5L27.5 12.5M27.5 7.5L22.5 12.5" stroke="#fff" stroke-width="1.5"/>
 <path d="M37 3L43 1L45 6L40 9Z" fill="#40c040"/><rect x="39" y="8" width="9" height="6" fill="#9ab" stroke="#345" transform="rotate(-25 43 11)"/>
 <path d="M63 3L65 8H70L66 11L68 16L63 13L58 16L60 11L56 8H61Z" fill="#f8e040" stroke="#b09020" stroke-width="0.7"/>
</svg>
<div class="a" style="left:1645px;top:1028px;font-size:12px">3:50</div>


</body></html>
